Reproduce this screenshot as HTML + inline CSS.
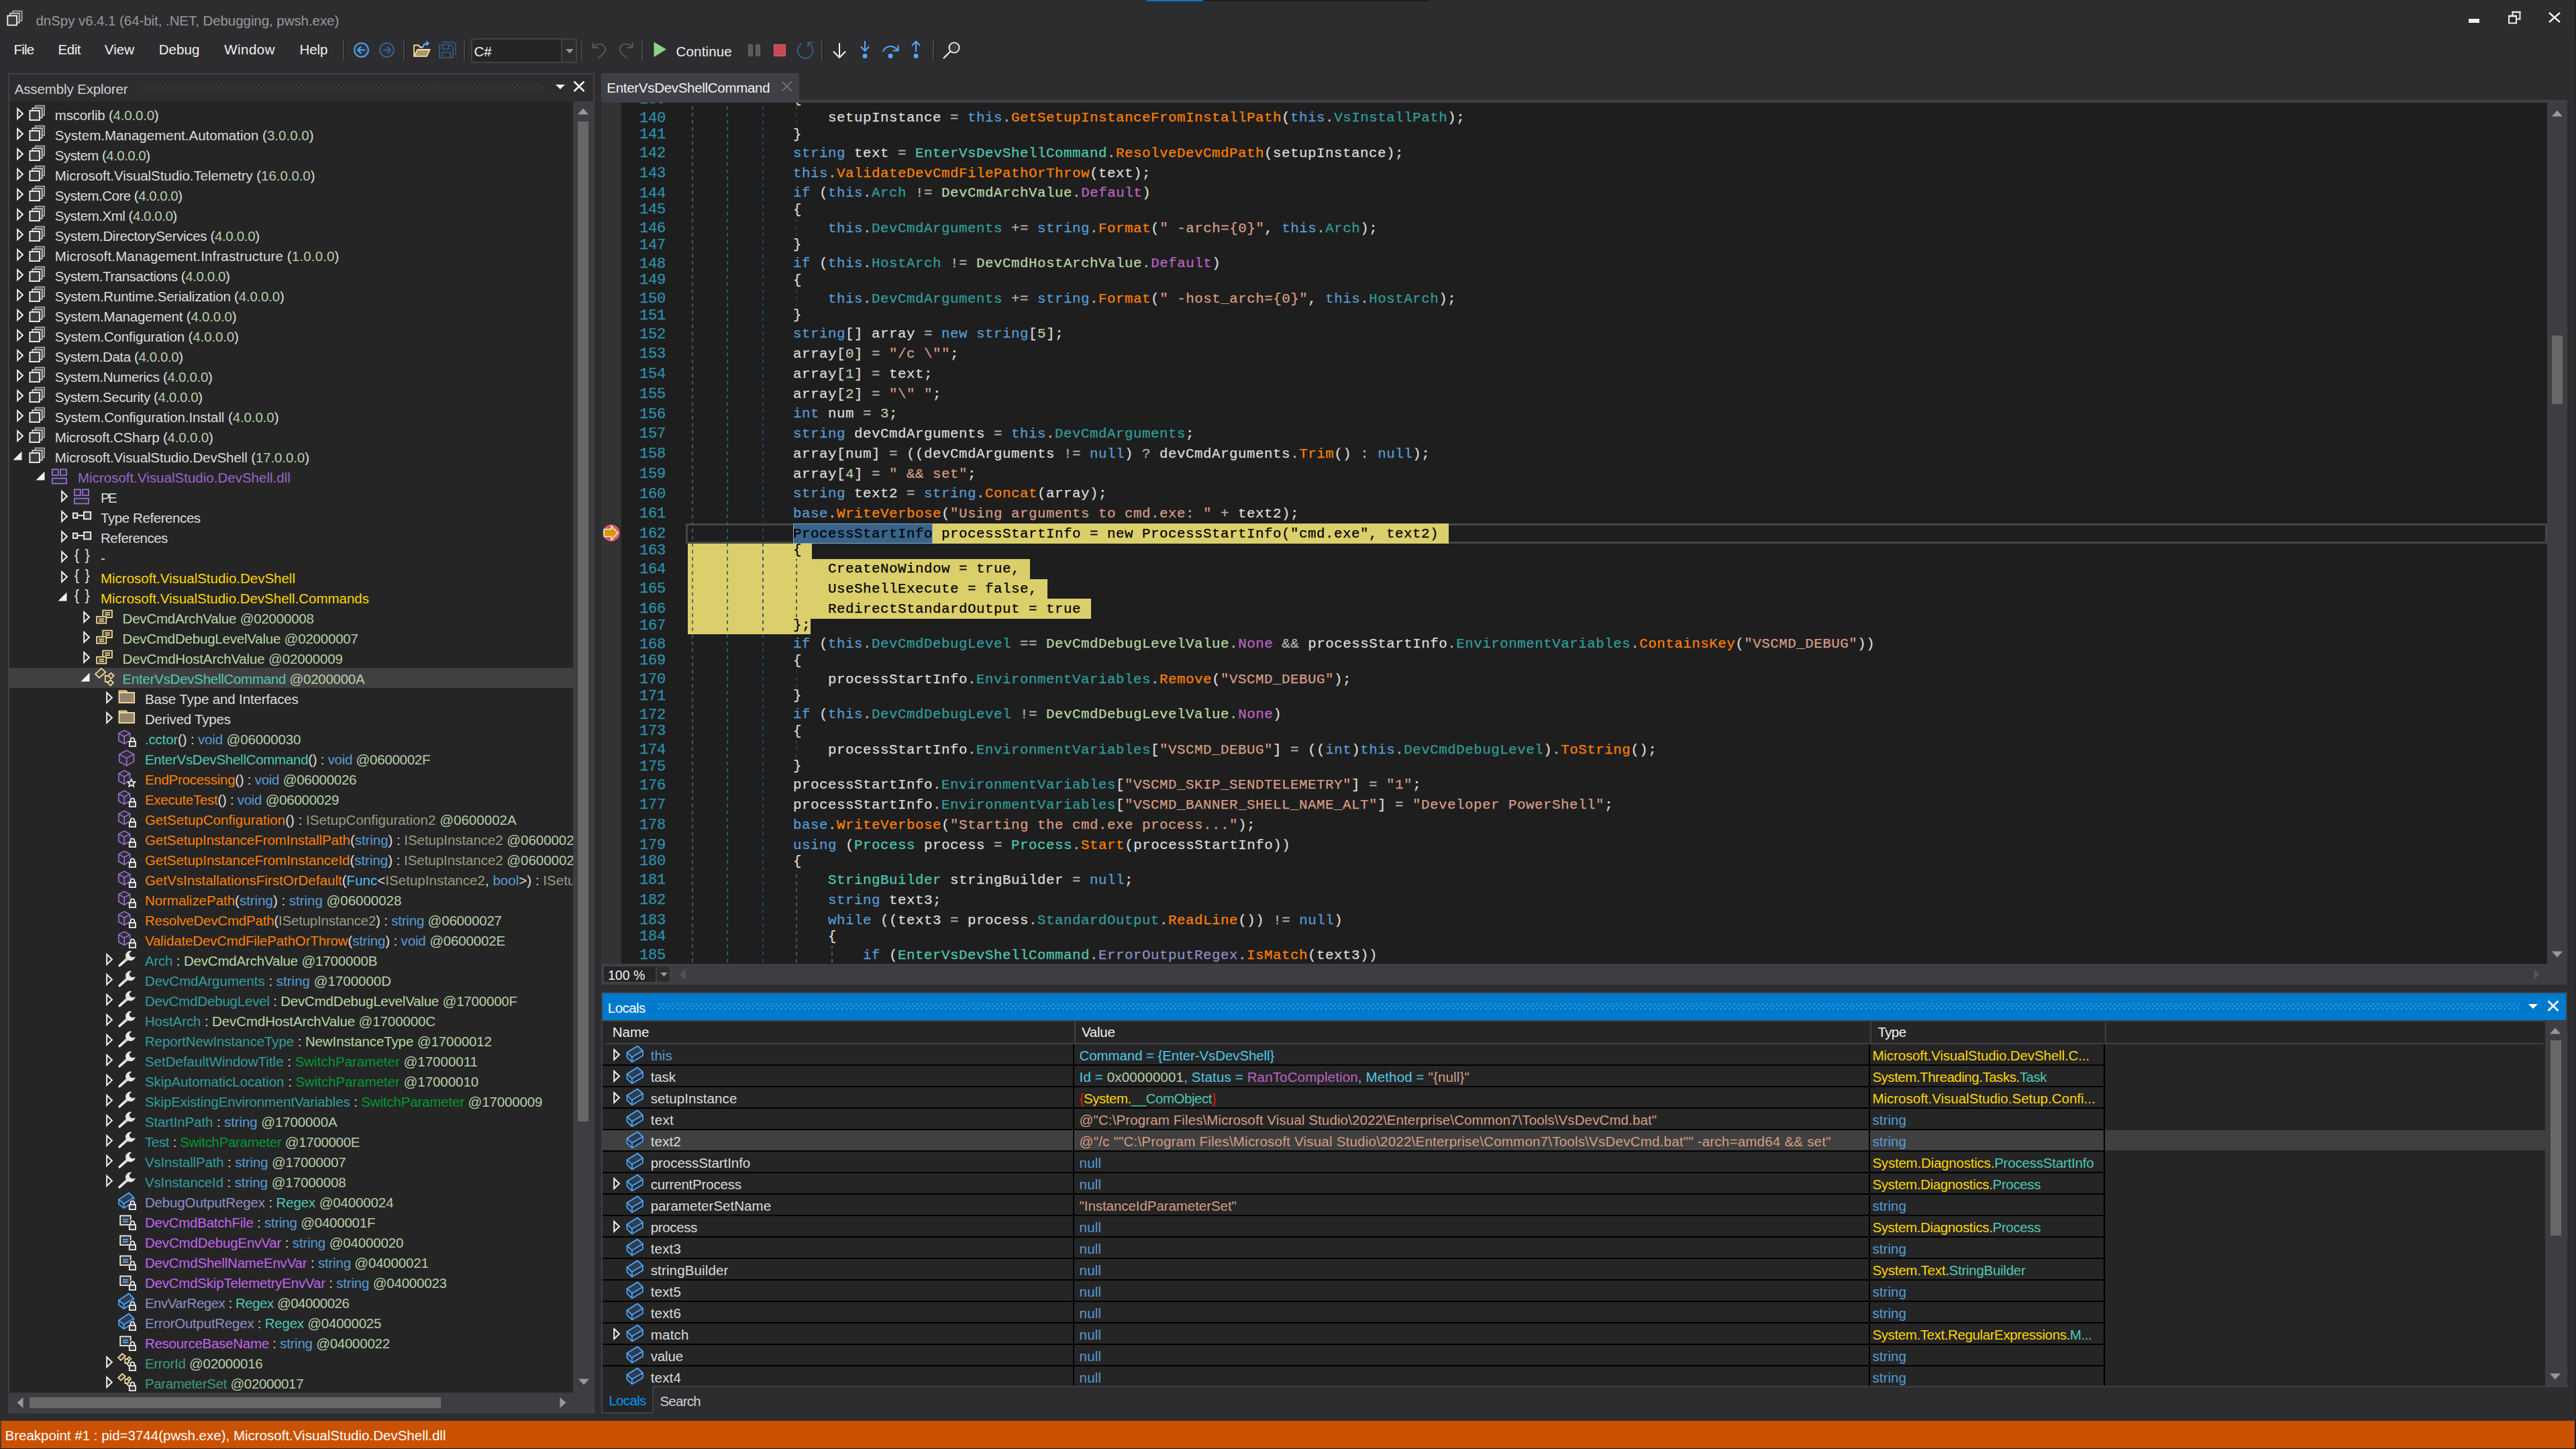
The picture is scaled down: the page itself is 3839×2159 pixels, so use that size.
<!DOCTYPE html><html><head><meta charset="utf-8"><title>dnSpy</title><style>

html,body{margin:0;padding:0;background:#2D2D30;overflow:hidden;}
body{width:3839px;height:2159px;position:relative;overflow:hidden;font-family:"Liberation Sans",sans-serif;color:#F1F1F1;}
.r{position:absolute;}
.u{position:absolute;white-space:pre;font-family:"Liberation Sans",sans-serif;}
.c{position:absolute;white-space:pre;font-family:"Liberation Mono",monospace;font-size:20.8px;height:30px;line-height:30px;letter-spacing:0.520px;-webkit-text-stroke:0.25px;}
.ln{color:#2B91AF;font-size:22.2px;letter-spacing:-0.320px;}
svg{position:absolute;overflow:visible;}
.clip{position:absolute;overflow:hidden;}

</style></head><body>

<div class="r" style="left:1709.0px;top:0.0px;width:84.0px;height:2.0px;background:#007ACC;"></div>
<div class="r" style="left:1793.0px;top:0.0px;width:337.0px;height:2.0px;background:#1E1E1E;"></div>
<svg style="left:10.2px;top:15.0px" width="26.5" height="26.5" viewBox="0 0 16 16"><g fill="#3C3C3C" stroke-width="1"><rect x="5.5" y="0.9" width="8.2" height="8.6" stroke="#A8A8A8"/><rect x="3" y="2.9" width="8.3" height="8.6" stroke="#C8C8C8"/><rect x="0.8" y="5.1" width="8.3" height="8.5" stroke="#F1F1F1" stroke-width="1.1"/></g></svg>
<div class="u" style="left:53.5px;top:16.4px;height:29px;line-height:29px;font-size:20.5px;color:#999999;letter-spacing:-0.062px;">dnSpy v6.4.1 (64-bit, .NET, Debugging, pwsh.exe)</div>
<div class="r" style="left:3679.0px;top:28.0px;width:16.0px;height:6.0px;background:#F1F1F1;"></div>
<svg style="left:3736px;top:15px" width="24" height="22" viewBox="0 0 24 22"><rect x="8.5" y="3" width="11" height="10.5" fill="none" stroke="#F1F1F1" stroke-width="2"/><rect x="7.5" y="1.8" width="13" height="2.4" fill="#F1F1F1"/><rect x="3" y="9" width="11" height="10.5" fill="#2D2D30" stroke="#F1F1F1" stroke-width="2"/><rect x="2" y="7.6" width="13" height="2.6" fill="#F1F1F1"/></svg>
<svg style="left:3796px;top:16px" width="22" height="20" viewBox="0 0 22 20"><path d="M3 3 L19 17 M19 3 L3 17" stroke="#F1F1F1" stroke-width="2.6" fill="none"/></svg>
<div class="u" style="left:20.5px;top:59.1px;height:29px;line-height:29px;font-size:20.5px;color:#F1F1F1;letter-spacing:-0.807px;">File</div>
<div class="u" style="left:86.5px;top:59.1px;height:29px;line-height:29px;font-size:20.5px;color:#F1F1F1;letter-spacing:-0.446px;">Edit</div>
<div class="u" style="left:155.8px;top:59.1px;height:29px;line-height:29px;font-size:20.5px;color:#F1F1F1;letter-spacing:0.069px;">View</div>
<div class="u" style="left:236.7px;top:59.1px;height:29px;line-height:29px;font-size:20.5px;color:#F1F1F1;letter-spacing:0.066px;">Debug</div>
<div class="u" style="left:334.3px;top:59.1px;height:29px;line-height:29px;font-size:20.5px;color:#F1F1F1;letter-spacing:0.457px;">Window</div>
<div class="u" style="left:446.5px;top:59.1px;height:29px;line-height:29px;font-size:20.5px;color:#F1F1F1;letter-spacing:-0.107px;">Help</div>
<div class="r" style="left:510.9px;top:60.0px;width:2.1px;height:30.8px;background:#46464A;"></div>
<div class="r" style="left:513.0px;top:60.0px;width:1.7px;height:30.8px;background:#222224;"></div>
<div class="r" style="left:600.9px;top:60.0px;width:2.1px;height:30.8px;background:#46464A;"></div>
<div class="r" style="left:603.0px;top:60.0px;width:1.7px;height:30.8px;background:#222224;"></div>
<div class="r" style="left:691.0px;top:60.0px;width:2.1px;height:30.8px;background:#46464A;"></div>
<div class="r" style="left:693.1px;top:60.0px;width:1.7px;height:30.8px;background:#222224;"></div>
<div class="r" style="left:865.6px;top:60.0px;width:2.1px;height:30.8px;background:#46464A;"></div>
<div class="r" style="left:867.7px;top:60.0px;width:1.7px;height:30.8px;background:#222224;"></div>
<div class="r" style="left:956.4px;top:60.0px;width:2.1px;height:30.8px;background:#46464A;"></div>
<div class="r" style="left:958.5px;top:60.0px;width:1.7px;height:30.8px;background:#222224;"></div>
<div class="r" style="left:1223.9px;top:60.0px;width:2.1px;height:30.8px;background:#46464A;"></div>
<div class="r" style="left:1226.0px;top:60.0px;width:1.7px;height:30.8px;background:#222224;"></div>
<div class="r" style="left:1390.0px;top:60.0px;width:2.1px;height:30.8px;background:#46464A;"></div>
<div class="r" style="left:1392.1px;top:60.0px;width:1.7px;height:30.8px;background:#222224;"></div>
<svg style="left:527.0px;top:63.0px" width="23" height="23" viewBox="0 0 23 23"><circle cx="11.5" cy="11.5" r="10.4" fill="#2E3542" stroke="#55AAFF" stroke-width="1.9"/><path d="M17 11.5 H6.5 M11 6.5 L6 11.5 L11 16.5" fill="none" stroke="#55AAFF" stroke-width="1.9"/></svg>
<svg style="left:565.0px;top:63.0px" width="23" height="23" viewBox="0 0 23 23"><circle cx="11.5" cy="11.5" r="10.4" fill="#2B2F38" stroke="#3B6490" stroke-width="1.9"/><path d="M6 11.5 H16.5 M12 6.5 L17 11.5 L12 16.5" fill="none" stroke="#3B6490" stroke-width="1.9"/></svg>
<svg style="left:616.0px;top:61.0px" width="26" height="25" viewBox="0 0 26 25"><path d="M1 22.5 V6.5 H8 L10 9.5 H14" fill="none" stroke="#F6DFA0" stroke-width="1.8"/><path d="M1.2 22.8 L6 13 H24.5 L20 22.8 Z" fill="#A8976F" stroke="#F6DFA0" stroke-width="1.8" stroke-linejoin="miter"/><path d="M14.5 10 C14.5 5 17 3.5 22 3.5 M19 0.5 L22.8 3.5 L19 6.8" fill="none" stroke="#55AAFF" stroke-width="1.9"/></svg>
<svg style="left:654.0px;top:62.0px" width="26" height="25" viewBox="0 0 26 25"><path d="M4.5 1 H22 L25 4 V20" fill="none" stroke="#355C86" stroke-width="1.6"/><path d="M1 4.5 H17.5 L21 8 V24 H1 Z M5.5 4.5 V11 H15 V4.5 M5 24 V16 H17 V24" fill="none" stroke="#355C86" stroke-width="1.7"/></svg>
<div class="r" style="left:702.0px;top:57.0px;width:158.0px;height:37.0px;background:#434346;"></div>
<div class="r" style="left:704.0px;top:59.0px;width:133.0px;height:33.0px;background:#252526;"></div>
<div class="r" style="left:837.0px;top:59.0px;width:21.0px;height:33.0px;background:#2D2D30;"></div>
<div class="r" style="left:836.0px;top:59.0px;width:1.5px;height:33.0px;background:#434346;"></div>
<svg style="left:843px;top:73px" width="12" height="7" viewBox="0 0 12 7"><path d="M0 0 H12 L6 6.5 Z" fill="#999999"/></svg>
<div class="u" style="left:706.5px;top:62.4px;height:29px;line-height:29px;font-size:20.5px;color:#F1F1F1;">C#</div>
<svg style="left:882.0px;top:62.0px" width="23" height="26" viewBox="0 0 23 26"><path d="M1.5 1 V9 H9.5" fill="none" stroke="#5A5A5E" stroke-width="1.8"/><path d="M2 9 C6 2 16 2 19.5 8 C21.5 12 20 15 17 18 L9.5 25" fill="none" stroke="#5A5A5E" stroke-width="1.8"/></svg>
<svg style="left:921.0px;top:62.0px" width="23" height="26" viewBox="0 0 23 26"><path d="M21.5 1 V9 H13.5" fill="none" stroke="#5A5A5E" stroke-width="1.8"/><path d="M21 9 C17 2 7 2 3.5 8 C1.5 12 3 15 6 18 L13.5 25" fill="none" stroke="#5A5A5E" stroke-width="1.8"/></svg>
<svg style="left:974px;top:62px" width="20" height="24" viewBox="0 0 20 24"><path d="M0.5 0.5 L19 11.5 L0.5 23 Z" fill="#8DD28A"/></svg>
<div class="u" style="left:1007.6px;top:61.8px;height:29px;line-height:29px;font-size:20.5px;color:#F1F1F1;letter-spacing:0.142px;">Continue</div>
<div class="r" style="left:1115.2px;top:66.0px;width:6.8px;height:18.0px;background:#5A5A5C;border-radius:1.5px;box-sizing:border-box;border:1px solid #68686A;"></div>
<div class="r" style="left:1125.9px;top:66.0px;width:6.8px;height:18.0px;background:#5A5A5C;border-radius:1.5px;box-sizing:border-box;border:1px solid #68686A;"></div>
<div class="r" style="left:1153.0px;top:66.0px;width:18.0px;height:18.0px;background:#C54B55;box-sizing:border-box;border:1.6px solid #F25A66;border-radius:1px;"></div>
<svg style="left:1187.0px;top:61.0px" width="26" height="27" viewBox="0 0 26 27"><path d="M8 4.2 A11.4 11.4 0 1 0 18 4.1" fill="none" stroke="#3B6792" stroke-width="1.6"/><path d="M17.3 9.6 V2.5 H24.4" fill="none" stroke="#3B6792" stroke-width="1.6"/></svg>
<svg style="left:1240.0px;top:63.0px" width="22" height="25" viewBox="0 0 22 25"><path d="M11 1 V22 M2 13.5 L11 22.8 L20 13.5" fill="none" stroke="#F1F1F1" stroke-width="2"/></svg>
<svg style="left:1278.0px;top:60.0px" width="22" height="28" viewBox="0 0 22 28"><path d="M11 1 V15.5 M5 9.5 L11 15.8 L17 9.5" fill="none" stroke="#55AAFF" stroke-width="2"/><circle cx="11" cy="23.5" r="3.4" fill="#55AAFF"/></svg>
<svg style="left:1314.0px;top:60.0px" width="26" height="28" viewBox="0 0 26 28"><path d="M2 17 C5 8 16 6 23.5 14.5" fill="none" stroke="#55AAFF" stroke-width="2"/><path d="M24.5 7.5 V15.5 H16.5" fill="none" stroke="#55AAFF" stroke-width="2"/><circle cx="13" cy="23.5" r="3.4" fill="#55AAFF"/></svg>
<svg style="left:1354.0px;top:60.0px" width="22" height="28" viewBox="0 0 22 28"><path d="M11 17 V2 M5 8 L11 1.8 L17 8" fill="none" stroke="#55AAFF" stroke-width="2"/><circle cx="11" cy="23.5" r="3.4" fill="#55AAFF"/></svg>
<svg style="left:1405.0px;top:62.0px" width="26" height="26" viewBox="0 0 26 26"><circle cx="17" cy="9" r="7.6" fill="#3C3C3C" stroke="#F1F1F1" stroke-width="1.9"/><path d="M11.5 14.5 L1 25" stroke="#F1F1F1" stroke-width="2.2"/></svg>
<div class="r" style="left:12.0px;top:109.0px;width:874.0px;height:1997.0px;background:#3F3F46;"></div>
<div class="r" style="left:14.0px;top:111.0px;width:870.0px;height:40.0px;background:#2D2D30;"></div>
<div class="r" style="left:14.0px;top:151.0px;width:840.0px;height:1924.0px;background:#252526;"></div>
<div class="r" style="left:854.0px;top:151.0px;width:30.0px;height:1924.0px;background:#3E3E42;"></div>
<div class="r" style="left:14.0px;top:2075.0px;width:870.0px;height:29.0px;background:#3E3E42;"></div>
<div class="u" style="left:21.7px;top:118.1px;height:29px;line-height:29px;font-size:20.5px;color:#D0D0D0;letter-spacing:-0.121px;">Assembly Explorer</div>
<svg style="left:210px;top:126px" width="600" height="10" viewBox="0 0 600 10"><defs><pattern id="g210_126" width="7" height="7" patternUnits="userSpaceOnUse"><rect x="0" y="0" width="1.8" height="1.8" fill="#46464A"/><rect x="3.5" y="3.5" width="1.8" height="1.8" fill="#46464A"/></pattern></defs><rect x="0" y="0" width="600" height="9" fill="url(#g210_126)"/></svg>
<svg style="left:828px;top:126.4px" width="14" height="8" viewBox="0 0 14 8"><path d="M0 0 H14 L7 7 Z" fill="#F1F1F1"/></svg>
<svg style="left:854.3px;top:120px" width="18" height="18" viewBox="0 0 18 18"><path d="M1.5 1.5 L16.5 16 M16.5 1.5 L1.5 16" stroke="#F1F1F1" stroke-width="2.6" fill="none"/></svg>
<svg style="left:861px;top:161.4px" width="16" height="10" viewBox="0 0 16 10"><path d="M0 9.5 L8 0.5 L16 9.5 Z" fill="#999999"/></svg>
<div class="r" style="left:861.0px;top:181.0px;width:16.0px;height:1490.0px;background:#686868;"></div>
<svg style="left:862px;top:2054px" width="16" height="10" viewBox="0 0 16 10"><path d="M0 0.5 L8 9.5 L16 0.5 Z" fill="#999999"/></svg>
<svg style="left:25px;top:2082px" width="10" height="16" viewBox="0 0 10 16"><path d="M9.5 0 L0.5 8 L9.5 16 Z" fill="#999999"/></svg>
<div class="r" style="left:44.0px;top:2082.0px;width:613.0px;height:16.0px;background:#686868;"></div>
<svg style="left:834px;top:2082px" width="10" height="16" viewBox="0 0 10 16"><path d="M0.5 0 L9.5 8 L0.5 16 Z" fill="#999999"/></svg>
<div class="clip" style="left:14px;top:151px;width:840px;height:1924px">
<svg style="left:10.5px;top:8.8px" width="12" height="19" viewBox="0 0 12 19"><path d="M1.2 2 L8.9 9.5 L1.2 17 Z" fill="none" stroke="#F1F1F1" stroke-width="2"/></svg>
<svg style="left:29.2px;top:5.0px" width="28" height="28" viewBox="0 0 16 16"><g fill="#3C3C3C" stroke-width="1"><rect x="5.5" y="0.9" width="7.7" height="8.1" stroke="#A8A8A8"/><rect x="3" y="2.9" width="8.3" height="8.3" stroke="#C8C8C8"/><rect x="0.8" y="5.1" width="8.3" height="8" stroke="#F1F1F1" stroke-width="1.1"/></g></svg>
<div class="u" style="left:67.8px;top:6.1px;height:29px;line-height:29px;font-size:20.5px;letter-spacing:-0.205px;"><span style="color:#DCDCDC">mscorlib (</span><span style="color:#B5CEA8">4.0.0.0</span><span style="color:#DCDCDC">)</span></div>
<svg style="left:10.5px;top:38.8px" width="12" height="19" viewBox="0 0 12 19"><path d="M1.2 2 L8.9 9.5 L1.2 17 Z" fill="none" stroke="#F1F1F1" stroke-width="2"/></svg>
<svg style="left:29.2px;top:35.0px" width="28" height="28" viewBox="0 0 16 16"><g fill="#3C3C3C" stroke-width="1"><rect x="5.5" y="0.9" width="7.7" height="8.1" stroke="#A8A8A8"/><rect x="3" y="2.9" width="8.3" height="8.3" stroke="#C8C8C8"/><rect x="0.8" y="5.1" width="8.3" height="8" stroke="#F1F1F1" stroke-width="1.1"/></g></svg>
<div class="u" style="left:67.8px;top:36.1px;height:29px;line-height:29px;font-size:20.5px;letter-spacing:0.016px;"><span style="color:#DCDCDC">System.Management.Automation (</span><span style="color:#B5CEA8">3.0.0.0</span><span style="color:#DCDCDC">)</span></div>
<svg style="left:10.5px;top:68.8px" width="12" height="19" viewBox="0 0 12 19"><path d="M1.2 2 L8.9 9.5 L1.2 17 Z" fill="none" stroke="#F1F1F1" stroke-width="2"/></svg>
<svg style="left:29.2px;top:65.0px" width="28" height="28" viewBox="0 0 16 16"><g fill="#3C3C3C" stroke-width="1"><rect x="5.5" y="0.9" width="7.7" height="8.1" stroke="#A8A8A8"/><rect x="3" y="2.9" width="8.3" height="8.3" stroke="#C8C8C8"/><rect x="0.8" y="5.1" width="8.3" height="8" stroke="#F1F1F1" stroke-width="1.1"/></g></svg>
<div class="u" style="left:67.8px;top:66.1px;height:29px;line-height:29px;font-size:20.5px;letter-spacing:-0.547px;"><span style="color:#DCDCDC">System (</span><span style="color:#B5CEA8">4.0.0.0</span><span style="color:#DCDCDC">)</span></div>
<svg style="left:10.5px;top:98.8px" width="12" height="19" viewBox="0 0 12 19"><path d="M1.2 2 L8.9 9.5 L1.2 17 Z" fill="none" stroke="#F1F1F1" stroke-width="2"/></svg>
<svg style="left:29.2px;top:95.0px" width="28" height="28" viewBox="0 0 16 16"><g fill="#3C3C3C" stroke-width="1"><rect x="5.5" y="0.9" width="7.7" height="8.1" stroke="#A8A8A8"/><rect x="3" y="2.9" width="8.3" height="8.3" stroke="#C8C8C8"/><rect x="0.8" y="5.1" width="8.3" height="8" stroke="#F1F1F1" stroke-width="1.1"/></g></svg>
<div class="u" style="left:67.8px;top:96.1px;height:29px;line-height:29px;font-size:20.5px;letter-spacing:-0.065px;"><span style="color:#DCDCDC">Microsoft.VisualStudio.Telemetry (</span><span style="color:#B5CEA8">16.0.0.0</span><span style="color:#DCDCDC">)</span></div>
<svg style="left:10.5px;top:128.8px" width="12" height="19" viewBox="0 0 12 19"><path d="M1.2 2 L8.9 9.5 L1.2 17 Z" fill="none" stroke="#F1F1F1" stroke-width="2"/></svg>
<svg style="left:29.2px;top:125.0px" width="28" height="28" viewBox="0 0 16 16"><g fill="#3C3C3C" stroke-width="1"><rect x="5.5" y="0.9" width="7.7" height="8.1" stroke="#A8A8A8"/><rect x="3" y="2.9" width="8.3" height="8.3" stroke="#C8C8C8"/><rect x="0.8" y="5.1" width="8.3" height="8" stroke="#F1F1F1" stroke-width="1.1"/></g></svg>
<div class="u" style="left:67.8px;top:126.1px;height:29px;line-height:29px;font-size:20.5px;letter-spacing:-0.514px;"><span style="color:#DCDCDC">System.Core (</span><span style="color:#B5CEA8">4.0.0.0</span><span style="color:#DCDCDC">)</span></div>
<svg style="left:10.5px;top:158.8px" width="12" height="19" viewBox="0 0 12 19"><path d="M1.2 2 L8.9 9.5 L1.2 17 Z" fill="none" stroke="#F1F1F1" stroke-width="2"/></svg>
<svg style="left:29.2px;top:155.0px" width="28" height="28" viewBox="0 0 16 16"><g fill="#3C3C3C" stroke-width="1"><rect x="5.5" y="0.9" width="7.7" height="8.1" stroke="#A8A8A8"/><rect x="3" y="2.9" width="8.3" height="8.3" stroke="#C8C8C8"/><rect x="0.8" y="5.1" width="8.3" height="8" stroke="#F1F1F1" stroke-width="1.1"/></g></svg>
<div class="u" style="left:67.8px;top:156.1px;height:29px;line-height:29px;font-size:20.5px;letter-spacing:-0.475px;"><span style="color:#DCDCDC">System.Xml (</span><span style="color:#B5CEA8">4.0.0.0</span><span style="color:#DCDCDC">)</span></div>
<svg style="left:10.5px;top:188.8px" width="12" height="19" viewBox="0 0 12 19"><path d="M1.2 2 L8.9 9.5 L1.2 17 Z" fill="none" stroke="#F1F1F1" stroke-width="2"/></svg>
<svg style="left:29.2px;top:185.0px" width="28" height="28" viewBox="0 0 16 16"><g fill="#3C3C3C" stroke-width="1"><rect x="5.5" y="0.9" width="7.7" height="8.1" stroke="#A8A8A8"/><rect x="3" y="2.9" width="8.3" height="8.3" stroke="#C8C8C8"/><rect x="0.8" y="5.1" width="8.3" height="8" stroke="#F1F1F1" stroke-width="1.1"/></g></svg>
<div class="u" style="left:67.8px;top:186.1px;height:29px;line-height:29px;font-size:20.5px;letter-spacing:-0.348px;"><span style="color:#DCDCDC">System.DirectoryServices (</span><span style="color:#B5CEA8">4.0.0.0</span><span style="color:#DCDCDC">)</span></div>
<svg style="left:10.5px;top:218.8px" width="12" height="19" viewBox="0 0 12 19"><path d="M1.2 2 L8.9 9.5 L1.2 17 Z" fill="none" stroke="#F1F1F1" stroke-width="2"/></svg>
<svg style="left:29.2px;top:215.0px" width="28" height="28" viewBox="0 0 16 16"><g fill="#3C3C3C" stroke-width="1"><rect x="5.5" y="0.9" width="7.7" height="8.1" stroke="#A8A8A8"/><rect x="3" y="2.9" width="8.3" height="8.3" stroke="#C8C8C8"/><rect x="0.8" y="5.1" width="8.3" height="8" stroke="#F1F1F1" stroke-width="1.1"/></g></svg>
<div class="u" style="left:67.8px;top:216.1px;height:29px;line-height:29px;font-size:20.5px;letter-spacing:0.15px;"><span style="color:#DCDCDC">Microsoft.Management.Infrastructure (</span><span style="color:#B5CEA8">1.0.0.0</span><span style="color:#DCDCDC">)</span></div>
<svg style="left:10.5px;top:248.8px" width="12" height="19" viewBox="0 0 12 19"><path d="M1.2 2 L8.9 9.5 L1.2 17 Z" fill="none" stroke="#F1F1F1" stroke-width="2"/></svg>
<svg style="left:29.2px;top:245.0px" width="28" height="28" viewBox="0 0 16 16"><g fill="#3C3C3C" stroke-width="1"><rect x="5.5" y="0.9" width="7.7" height="8.1" stroke="#A8A8A8"/><rect x="3" y="2.9" width="8.3" height="8.3" stroke="#C8C8C8"/><rect x="0.8" y="5.1" width="8.3" height="8" stroke="#F1F1F1" stroke-width="1.1"/></g></svg>
<div class="u" style="left:67.8px;top:246.1px;height:29px;line-height:29px;font-size:20.5px;letter-spacing:-0.419px;"><span style="color:#DCDCDC">System.Transactions (</span><span style="color:#B5CEA8">4.0.0.0</span><span style="color:#DCDCDC">)</span></div>
<svg style="left:10.5px;top:278.8px" width="12" height="19" viewBox="0 0 12 19"><path d="M1.2 2 L8.9 9.5 L1.2 17 Z" fill="none" stroke="#F1F1F1" stroke-width="2"/></svg>
<svg style="left:29.2px;top:275.0px" width="28" height="28" viewBox="0 0 16 16"><g fill="#3C3C3C" stroke-width="1"><rect x="5.5" y="0.9" width="7.7" height="8.1" stroke="#A8A8A8"/><rect x="3" y="2.9" width="8.3" height="8.3" stroke="#C8C8C8"/><rect x="0.8" y="5.1" width="8.3" height="8" stroke="#F1F1F1" stroke-width="1.1"/></g></svg>
<div class="u" style="left:67.8px;top:276.1px;height:29px;line-height:29px;font-size:20.5px;letter-spacing:-0.211px;"><span style="color:#DCDCDC">System.Runtime.Serialization (</span><span style="color:#B5CEA8">4.0.0.0</span><span style="color:#DCDCDC">)</span></div>
<svg style="left:10.5px;top:308.8px" width="12" height="19" viewBox="0 0 12 19"><path d="M1.2 2 L8.9 9.5 L1.2 17 Z" fill="none" stroke="#F1F1F1" stroke-width="2"/></svg>
<svg style="left:29.2px;top:305.0px" width="28" height="28" viewBox="0 0 16 16"><g fill="#3C3C3C" stroke-width="1"><rect x="5.5" y="0.9" width="7.7" height="8.1" stroke="#A8A8A8"/><rect x="3" y="2.9" width="8.3" height="8.3" stroke="#C8C8C8"/><rect x="0.8" y="5.1" width="8.3" height="8" stroke="#F1F1F1" stroke-width="1.1"/></g></svg>
<div class="u" style="left:67.8px;top:306.1px;height:29px;line-height:29px;font-size:20.5px;letter-spacing:-0.191px;"><span style="color:#DCDCDC">System.Management (</span><span style="color:#B5CEA8">4.0.0.0</span><span style="color:#DCDCDC">)</span></div>
<svg style="left:10.5px;top:338.8px" width="12" height="19" viewBox="0 0 12 19"><path d="M1.2 2 L8.9 9.5 L1.2 17 Z" fill="none" stroke="#F1F1F1" stroke-width="2"/></svg>
<svg style="left:29.2px;top:335.0px" width="28" height="28" viewBox="0 0 16 16"><g fill="#3C3C3C" stroke-width="1"><rect x="5.5" y="0.9" width="7.7" height="8.1" stroke="#A8A8A8"/><rect x="3" y="2.9" width="8.3" height="8.3" stroke="#C8C8C8"/><rect x="0.8" y="5.1" width="8.3" height="8" stroke="#F1F1F1" stroke-width="1.1"/></g></svg>
<div class="u" style="left:67.8px;top:336.1px;height:29px;line-height:29px;font-size:20.5px;letter-spacing:-0.136px;"><span style="color:#DCDCDC">System.Configuration (</span><span style="color:#B5CEA8">4.0.0.0</span><span style="color:#DCDCDC">)</span></div>
<svg style="left:10.5px;top:368.8px" width="12" height="19" viewBox="0 0 12 19"><path d="M1.2 2 L8.9 9.5 L1.2 17 Z" fill="none" stroke="#F1F1F1" stroke-width="2"/></svg>
<svg style="left:29.2px;top:365.0px" width="28" height="28" viewBox="0 0 16 16"><g fill="#3C3C3C" stroke-width="1"><rect x="5.5" y="0.9" width="7.7" height="8.1" stroke="#A8A8A8"/><rect x="3" y="2.9" width="8.3" height="8.3" stroke="#C8C8C8"/><rect x="0.8" y="5.1" width="8.3" height="8" stroke="#F1F1F1" stroke-width="1.1"/></g></svg>
<div class="u" style="left:67.8px;top:366.1px;height:29px;line-height:29px;font-size:20.5px;letter-spacing:-0.408px;"><span style="color:#DCDCDC">System.Data (</span><span style="color:#B5CEA8">4.0.0.0</span><span style="color:#DCDCDC">)</span></div>
<svg style="left:10.5px;top:398.8px" width="12" height="19" viewBox="0 0 12 19"><path d="M1.2 2 L8.9 9.5 L1.2 17 Z" fill="none" stroke="#F1F1F1" stroke-width="2"/></svg>
<svg style="left:29.2px;top:395.0px" width="28" height="28" viewBox="0 0 16 16"><g fill="#3C3C3C" stroke-width="1"><rect x="5.5" y="0.9" width="7.7" height="8.1" stroke="#A8A8A8"/><rect x="3" y="2.9" width="8.3" height="8.3" stroke="#C8C8C8"/><rect x="0.8" y="5.1" width="8.3" height="8" stroke="#F1F1F1" stroke-width="1.1"/></g></svg>
<div class="u" style="left:67.8px;top:396.1px;height:29px;line-height:29px;font-size:20.5px;letter-spacing:-0.314px;"><span style="color:#DCDCDC">System.Numerics (</span><span style="color:#B5CEA8">4.0.0.0</span><span style="color:#DCDCDC">)</span></div>
<svg style="left:10.5px;top:428.8px" width="12" height="19" viewBox="0 0 12 19"><path d="M1.2 2 L8.9 9.5 L1.2 17 Z" fill="none" stroke="#F1F1F1" stroke-width="2"/></svg>
<svg style="left:29.2px;top:425.0px" width="28" height="28" viewBox="0 0 16 16"><g fill="#3C3C3C" stroke-width="1"><rect x="5.5" y="0.9" width="7.7" height="8.1" stroke="#A8A8A8"/><rect x="3" y="2.9" width="8.3" height="8.3" stroke="#C8C8C8"/><rect x="0.8" y="5.1" width="8.3" height="8" stroke="#F1F1F1" stroke-width="1.1"/></g></svg>
<div class="u" style="left:67.8px;top:426.1px;height:29px;line-height:29px;font-size:20.5px;letter-spacing:-0.41px;"><span style="color:#DCDCDC">System.Security (</span><span style="color:#B5CEA8">4.0.0.0</span><span style="color:#DCDCDC">)</span></div>
<svg style="left:10.5px;top:458.8px" width="12" height="19" viewBox="0 0 12 19"><path d="M1.2 2 L8.9 9.5 L1.2 17 Z" fill="none" stroke="#F1F1F1" stroke-width="2"/></svg>
<svg style="left:29.2px;top:455.0px" width="28" height="28" viewBox="0 0 16 16"><g fill="#3C3C3C" stroke-width="1"><rect x="5.5" y="0.9" width="7.7" height="8.1" stroke="#A8A8A8"/><rect x="3" y="2.9" width="8.3" height="8.3" stroke="#C8C8C8"/><rect x="0.8" y="5.1" width="8.3" height="8" stroke="#F1F1F1" stroke-width="1.1"/></g></svg>
<div class="u" style="left:67.8px;top:456.1px;height:29px;line-height:29px;font-size:20.5px;letter-spacing:-0.097px;"><span style="color:#DCDCDC">System.Configuration.Install (</span><span style="color:#B5CEA8">4.0.0.0</span><span style="color:#DCDCDC">)</span></div>
<svg style="left:10.5px;top:488.8px" width="12" height="19" viewBox="0 0 12 19"><path d="M1.2 2 L8.9 9.5 L1.2 17 Z" fill="none" stroke="#F1F1F1" stroke-width="2"/></svg>
<svg style="left:29.2px;top:485.0px" width="28" height="28" viewBox="0 0 16 16"><g fill="#3C3C3C" stroke-width="1"><rect x="5.5" y="0.9" width="7.7" height="8.1" stroke="#A8A8A8"/><rect x="3" y="2.9" width="8.3" height="8.3" stroke="#C8C8C8"/><rect x="0.8" y="5.1" width="8.3" height="8" stroke="#F1F1F1" stroke-width="1.1"/></g></svg>
<div class="u" style="left:67.8px;top:486.1px;height:29px;line-height:29px;font-size:20.5px;letter-spacing:-0.172px;"><span style="color:#DCDCDC">Microsoft.CSharp (</span><span style="color:#B5CEA8">4.0.0.0</span><span style="color:#DCDCDC">)</span></div>
<svg style="left:5.3px;top:520.6px" width="14" height="14" viewBox="0 0 14 14"><path d="M13.5 0.5 V13.5 H0.5 Z" fill="#F1F1F1"/></svg>
<svg style="left:29.2px;top:515.0px" width="28" height="28" viewBox="0 0 16 16"><g fill="#3C3C3C" stroke-width="1"><rect x="5.5" y="0.9" width="7.7" height="8.1" stroke="#A8A8A8"/><rect x="3" y="2.9" width="8.3" height="8.3" stroke="#C8C8C8"/><rect x="0.8" y="5.1" width="8.3" height="8" stroke="#F1F1F1" stroke-width="1.1"/></g></svg>
<div class="u" style="left:67.8px;top:516.1px;height:29px;line-height:29px;font-size:20.5px;letter-spacing:-0.109px;"><span style="color:#DCDCDC">Microsoft.VisualStudio.DevShell (</span><span style="color:#B5CEA8">17.0.0.0</span><span style="color:#DCDCDC">)</span></div>
<svg style="left:38.7px;top:550.6px" width="14" height="14" viewBox="0 0 14 14"><path d="M13.5 0.5 V13.5 H0.5 Z" fill="#F1F1F1"/></svg>
<svg style="left:62.5px;top:545.0px" width="28" height="28" viewBox="0 0 16 16"><g fill="#2E2A36" stroke="#9E76D4" stroke-width="0.95"><rect x="0.5" y="1.9" width="5.1" height="5.1"/><rect x="7.5" y="1.9" width="5.1" height="5.1"/><rect x="0.5" y="9.5" width="12.1" height="4.5"/></g></svg>
<div class="u" style="left:102.0px;top:546.1px;height:29px;line-height:29px;font-size:20.5px;letter-spacing:0.012px;"><span style="color:#9966CC">Microsoft.VisualStudio.DevShell.dll</span></div>
<svg style="left:76.9px;top:578.8px" width="12" height="19" viewBox="0 0 12 19"><path d="M1.2 2 L8.9 9.5 L1.2 17 Z" fill="none" stroke="#F1F1F1" stroke-width="2"/></svg>
<svg style="left:95.8px;top:575.0px" width="28" height="28" viewBox="0 0 16 16"><g fill="#2E2A36" stroke="#9E76D4" stroke-width="0.95"><rect x="0.5" y="1.9" width="5.1" height="5.1"/><rect x="7.5" y="1.9" width="5.1" height="5.1"/><rect x="0.5" y="9.5" width="12.1" height="4.5"/></g></svg>
<div class="u" style="left:136.0px;top:576.1px;height:29px;line-height:29px;font-size:20.5px;letter-spacing:-2.685px;"><span style="color:#DCDCDC">PE</span></div>
<svg style="left:76.9px;top:608.8px" width="12" height="19" viewBox="0 0 12 19"><path d="M1.2 2 L8.9 9.5 L1.2 17 Z" fill="none" stroke="#F1F1F1" stroke-width="2"/></svg>
<svg style="left:95.8px;top:605.0px" width="28" height="28" viewBox="0 0 16 16"><g fill="#3C3C3C" stroke="#F1F1F1" stroke-width="1.1"><path d="M3.4 6.9 H8.1" fill="none"/><rect x="-0.6" y="4.9" width="3.6" height="4.2"/><rect x="8.6" y="3.9" width="5.8" height="6"/></g></svg>
<div class="u" style="left:136.0px;top:606.1px;height:29px;line-height:29px;font-size:20.5px;letter-spacing:-0.418px;"><span style="color:#DCDCDC">Type References</span></div>
<svg style="left:76.9px;top:638.8px" width="12" height="19" viewBox="0 0 12 19"><path d="M1.2 2 L8.9 9.5 L1.2 17 Z" fill="none" stroke="#F1F1F1" stroke-width="2"/></svg>
<svg style="left:95.8px;top:635.0px" width="28" height="28" viewBox="0 0 16 16"><g fill="#3C3C3C" stroke="#F1F1F1" stroke-width="1.1"><path d="M3.4 6.9 H8.1" fill="none"/><rect x="-0.6" y="4.9" width="3.6" height="4.2"/><rect x="8.6" y="3.9" width="5.8" height="6"/></g></svg>
<div class="u" style="left:136.0px;top:636.1px;height:29px;line-height:29px;font-size:20.5px;letter-spacing:-0.496px;"><span style="color:#DCDCDC">References</span></div>
<svg style="left:76.9px;top:668.8px" width="12" height="19" viewBox="0 0 12 19"><path d="M1.2 2 L8.9 9.5 L1.2 17 Z" fill="none" stroke="#F1F1F1" stroke-width="2"/></svg>
<div class="u" style="left:96.8px;top:660.1px;height:31px;line-height:31px;font-size:22px;color:#DCDCDC;letter-spacing:1.1px;">{ }</div>
<div class="u" style="left:136.0px;top:666.1px;height:29px;line-height:29px;font-size:20.5px;letter-spacing:-0.119px;"><span style="color:#DCDCDC">-</span></div>
<svg style="left:76.9px;top:698.8px" width="12" height="19" viewBox="0 0 12 19"><path d="M1.2 2 L8.9 9.5 L1.2 17 Z" fill="none" stroke="#F1F1F1" stroke-width="2"/></svg>
<div class="u" style="left:96.8px;top:690.1px;height:31px;line-height:31px;font-size:22px;color:#DCDCDC;letter-spacing:1.1px;">{ }</div>
<div class="u" style="left:136.0px;top:696.1px;height:29px;line-height:29px;font-size:20.5px;letter-spacing:-0.007px;"><span style="color:#FFD700">Microsoft.VisualStudio.DevShell</span></div>
<svg style="left:72.4px;top:730.6px" width="14" height="14" viewBox="0 0 14 14"><path d="M13.5 0.5 V13.5 H0.5 Z" fill="#F1F1F1"/></svg>
<div class="u" style="left:96.8px;top:720.1px;height:31px;line-height:31px;font-size:22px;color:#DCDCDC;letter-spacing:1.1px;">{ }</div>
<div class="u" style="left:136.0px;top:726.1px;height:29px;line-height:29px;font-size:20.5px;letter-spacing:-0.019px;"><span style="color:#FFD700">Microsoft.VisualStudio.DevShell.Commands</span></div>
<svg style="left:110.4px;top:758.8px" width="12" height="19" viewBox="0 0 12 19"><path d="M1.2 2 L8.9 9.5 L1.2 17 Z" fill="none" stroke="#F1F1F1" stroke-width="2"/></svg>
<svg style="left:129.0px;top:755.0px" width="28" height="28" viewBox="0 0 16 16"><g fill="#2F2B22" stroke="#F6DFA0" stroke-width="1"><rect x="5.9" y="2" width="7.8" height="6"/><path d="M7.6 4 H12 M7.6 5.8 H12" fill="none"/><rect x="0.65" y="7.3" width="8.1" height="5.6"/><path d="M2.4 9.3 H7 M2.4 11 H7" fill="none"/></g></svg>
<div class="u" style="left:168.6px;top:756.1px;height:29px;line-height:29px;font-size:20.5px;letter-spacing:-0.215px;"><span style="color:#B8D7A3">DevCmdArchValue</span><span style="color:#DCDCDC"> </span><span style="color:#B5CEA8">@02000008</span></div>
<svg style="left:110.4px;top:788.8px" width="12" height="19" viewBox="0 0 12 19"><path d="M1.2 2 L8.9 9.5 L1.2 17 Z" fill="none" stroke="#F1F1F1" stroke-width="2"/></svg>
<svg style="left:129.0px;top:785.0px" width="28" height="28" viewBox="0 0 16 16"><g fill="#2F2B22" stroke="#F6DFA0" stroke-width="1"><rect x="5.9" y="2" width="7.8" height="6"/><path d="M7.6 4 H12 M7.6 5.8 H12" fill="none"/><rect x="0.65" y="7.3" width="8.1" height="5.6"/><path d="M2.4 9.3 H7 M2.4 11 H7" fill="none"/></g></svg>
<div class="u" style="left:168.6px;top:786.1px;height:29px;line-height:29px;font-size:20.5px;letter-spacing:-0.216px;"><span style="color:#B8D7A3">DevCmdDebugLevelValue</span><span style="color:#DCDCDC"> </span><span style="color:#B5CEA8">@02000007</span></div>
<svg style="left:110.4px;top:818.8px" width="12" height="19" viewBox="0 0 12 19"><path d="M1.2 2 L8.9 9.5 L1.2 17 Z" fill="none" stroke="#F1F1F1" stroke-width="2"/></svg>
<svg style="left:129.0px;top:815.0px" width="28" height="28" viewBox="0 0 16 16"><g fill="#2F2B22" stroke="#F6DFA0" stroke-width="1"><rect x="5.9" y="2" width="7.8" height="6"/><path d="M7.6 4 H12 M7.6 5.8 H12" fill="none"/><rect x="0.65" y="7.3" width="8.1" height="5.6"/><path d="M2.4 9.3 H7 M2.4 11 H7" fill="none"/></g></svg>
<div class="u" style="left:168.6px;top:816.1px;height:29px;line-height:29px;font-size:20.5px;letter-spacing:-0.161px;"><span style="color:#B8D7A3">DevCmdHostArchValue</span><span style="color:#DCDCDC"> </span><span style="color:#B5CEA8">@02000009</span></div>
<div class="r" style="left:0.0px;top:844.0px;width:840.0px;height:30.0px;background:#404040;"></div>
<svg style="left:105.8px;top:850.6px" width="14" height="14" viewBox="0 0 14 14"><path d="M13.5 0.5 V13.5 H0.5 Z" fill="#F1F1F1"/></svg>
<svg style="left:129.0px;top:845.0px" width="28" height="28" viewBox="0 0 16 16"><g transform="translate(0 0) scale(1.0)" fill="#4A4438" stroke="#F6DFA0" stroke-width="1.00" stroke-linejoin="miter"><path d="M7.9 5.3 V11.4 H10.6 M7.9 6.4 H10.6" fill="none"/><path d="M4.55 -0.1 L8.2 3.1 L2.75 8 L-0.5 4.7 Z"/><path d="M12.8 3.8 L15.2 6.2 L12.8 8.6 L10.4 6.2 Z"/><path d="M12.4 9.8 L14.8 12.2 L12.4 14.6 L10 12.2 Z"/></g></svg>
<div class="u" style="left:168.6px;top:846.1px;height:29px;line-height:29px;font-size:20.5px;letter-spacing:-0.273px;"><span style="color:#4EC9B0">EnterVsDevShellCommand</span><span style="color:#DCDCDC"> </span><span style="color:#B5CEA8">@0200000A</span></div>
<svg style="left:143.6px;top:878.8px" width="12" height="19" viewBox="0 0 12 19"><path d="M1.2 2 L8.9 9.5 L1.2 17 Z" fill="none" stroke="#F1F1F1" stroke-width="2"/></svg>
<svg style="left:162.2px;top:875.0px" width="28" height="28" viewBox="0 0 16 16"><path d="M0.85 1.9 H7 L7.9 3.4 H13.8 V12.1 H0.85 Z" fill="#94846A" stroke="#F6DFA0" stroke-width="1" stroke-linejoin="miter"/><path d="M0.85 3.4 H7.9" stroke="#F6DFA0" stroke-width="1" fill="none"/></svg>
<div class="u" style="left:201.9px;top:876.1px;height:29px;line-height:29px;font-size:20.5px;letter-spacing:-0.136px;"><span style="color:#DCDCDC">Base Type and Interfaces</span></div>
<svg style="left:143.6px;top:908.8px" width="12" height="19" viewBox="0 0 12 19"><path d="M1.2 2 L8.9 9.5 L1.2 17 Z" fill="none" stroke="#F1F1F1" stroke-width="2"/></svg>
<svg style="left:162.2px;top:905.0px" width="28" height="28" viewBox="0 0 16 16"><path d="M0.85 1.9 H7 L7.9 3.4 H13.8 V12.1 H0.85 Z" fill="#94846A" stroke="#F6DFA0" stroke-width="1" stroke-linejoin="miter"/><path d="M0.85 3.4 H7.9" stroke="#F6DFA0" stroke-width="1" fill="none"/></svg>
<div class="u" style="left:201.9px;top:906.1px;height:29px;line-height:29px;font-size:20.5px;letter-spacing:-0.218px;"><span style="color:#DCDCDC">Derived Types</span></div>
<svg style="left:162.2px;top:935.0px" width="28" height="28" viewBox="0 0 16 16"><path d="M5.3 1.2 L10.1 3.8 V10 L5.3 12.8 L0.5 10 V3.8 Z" fill="#2E2A36" stroke="#9E76D4" stroke-width="0.9" stroke-linejoin="round"/><path d="M0.5 3.8 L5.3 6.5 L10.1 3.8 M5.3 6.5 V12.8" fill="none" stroke="#9E76D4" stroke-width="0.9"/><path d="M10.6 10.6 V9.3 A1.65 1.65 0 0 1 13.9 9.3 V10.6" fill="none" stroke="#252526" stroke-width="2.6"/><rect x="9.1" y="10.3" width="6.3" height="5.1" fill="#252526"/><path d="M10.6 10.6 V9.3 A1.65 1.65 0 0 1 13.9 9.3 V10.6" fill="none" stroke="#F1F1F1" stroke-width="1.1"/><rect x="9.6" y="10.8" width="5.3" height="4.1" fill="#3C3C3C" stroke="#F1F1F1" stroke-width="1"/></svg>
<div class="u" style="left:201.9px;top:936.1px;height:29px;line-height:29px;font-size:20.5px;letter-spacing:-0.159px;"><span style="color:#4EC9B0">.cctor</span><span style="color:#DCDCDC">() : </span><span style="color:#569CD6">void</span><span style="color:#DCDCDC"> </span><span style="color:#B5CEA8">@06000030</span></div>
<svg style="left:162.2px;top:965.0px" width="28" height="28" viewBox="0 0 16 16"><path d="M7.25 1.2 L13.4 4.5 V10.8 L7.25 14.2 L1 10.8 V4.5 Z" fill="#2E2A36" stroke="#9E76D4" stroke-width="0.9" stroke-linejoin="round"/><path d="M1 4.5 L7.25 7.8 L13.4 4.5 M7.25 7.8 V14.2" fill="none" stroke="#9E76D4" stroke-width="0.9"/></svg>
<div class="u" style="left:201.9px;top:966.1px;height:29px;line-height:29px;font-size:20.5px;letter-spacing:-0.279px;"><span style="color:#4EC9B0">EnterVsDevShellCommand</span><span style="color:#DCDCDC">() : </span><span style="color:#569CD6">void</span><span style="color:#DCDCDC"> </span><span style="color:#B5CEA8">@0600002F</span></div>
<svg style="left:162.2px;top:995.0px" width="28" height="28" viewBox="0 0 16 16"><path d="M5.3 1.2 L10.1 3.8 V10 L5.3 12.8 L0.5 10 V3.8 Z" fill="#2E2A36" stroke="#9E76D4" stroke-width="0.9" stroke-linejoin="round"/><path d="M0.5 3.8 L5.3 6.5 L10.1 3.8 M5.3 6.5 V12.8" fill="none" stroke="#9E76D4" stroke-width="0.9"/><path d="M11.30 8.56 L12.22 10.67 L14.56 10.89 L12.80 12.43 L13.32 14.72 L11.30 13.53 L9.28 14.72 L9.80 12.43 L8.04 10.89 L10.38 10.67 Z" fill="#252526" stroke="#252526" stroke-width="2.4"/><path d="M11.30 8.56 L12.22 10.67 L14.56 10.89 L12.80 12.43 L13.32 14.72 L11.30 13.53 L9.28 14.72 L9.80 12.43 L8.04 10.89 L10.38 10.67 Z" fill="#2A2A2A" stroke="#F1F1F1" stroke-width="0.95" stroke-linejoin="miter"/></svg>
<div class="u" style="left:201.9px;top:996.1px;height:29px;line-height:29px;font-size:20.5px;letter-spacing:-0.27px;"><span style="color:#FF8000">EndProcessing</span><span style="color:#DCDCDC">() : </span><span style="color:#569CD6">void</span><span style="color:#DCDCDC"> </span><span style="color:#B5CEA8">@06000026</span></div>
<svg style="left:162.2px;top:1025.0px" width="28" height="28" viewBox="0 0 16 16"><path d="M5.3 1.2 L10.1 3.8 V10 L5.3 12.8 L0.5 10 V3.8 Z" fill="#2E2A36" stroke="#9E76D4" stroke-width="0.9" stroke-linejoin="round"/><path d="M0.5 3.8 L5.3 6.5 L10.1 3.8 M5.3 6.5 V12.8" fill="none" stroke="#9E76D4" stroke-width="0.9"/><path d="M10.6 10.6 V9.3 A1.65 1.65 0 0 1 13.9 9.3 V10.6" fill="none" stroke="#252526" stroke-width="2.6"/><rect x="9.1" y="10.3" width="6.3" height="5.1" fill="#252526"/><path d="M10.6 10.6 V9.3 A1.65 1.65 0 0 1 13.9 9.3 V10.6" fill="none" stroke="#F1F1F1" stroke-width="1.1"/><rect x="9.6" y="10.8" width="5.3" height="4.1" fill="#3C3C3C" stroke="#F1F1F1" stroke-width="1"/></svg>
<div class="u" style="left:201.9px;top:1026.1px;height:29px;line-height:29px;font-size:20.5px;letter-spacing:-0.284px;"><span style="color:#FF8000">ExecuteTest</span><span style="color:#DCDCDC">() : </span><span style="color:#569CD6">void</span><span style="color:#DCDCDC"> </span><span style="color:#B5CEA8">@06000029</span></div>
<svg style="left:162.2px;top:1055.0px" width="28" height="28" viewBox="0 0 16 16"><path d="M5.3 1.2 L10.1 3.8 V10 L5.3 12.8 L0.5 10 V3.8 Z" fill="#2E2A36" stroke="#9E76D4" stroke-width="0.9" stroke-linejoin="round"/><path d="M0.5 3.8 L5.3 6.5 L10.1 3.8 M5.3 6.5 V12.8" fill="none" stroke="#9E76D4" stroke-width="0.9"/><path d="M10.6 10.6 V9.3 A1.65 1.65 0 0 1 13.9 9.3 V10.6" fill="none" stroke="#252526" stroke-width="2.6"/><rect x="9.1" y="10.3" width="6.3" height="5.1" fill="#252526"/><path d="M10.6 10.6 V9.3 A1.65 1.65 0 0 1 13.9 9.3 V10.6" fill="none" stroke="#F1F1F1" stroke-width="1.1"/><rect x="9.6" y="10.8" width="5.3" height="4.1" fill="#3C3C3C" stroke="#F1F1F1" stroke-width="1"/></svg>
<div class="u" style="left:201.9px;top:1056.1px;height:29px;line-height:29px;font-size:20.5px;letter-spacing:0.035px;"><span style="color:#FF8000">GetSetupConfiguration</span><span style="color:#DCDCDC">() : </span><span style="color:#9B9B82">ISetupConfiguration2</span><span style="color:#DCDCDC"> </span><span style="color:#B5CEA8">@0600002A</span></div>
<svg style="left:162.2px;top:1085.0px" width="28" height="28" viewBox="0 0 16 16"><path d="M5.3 1.2 L10.1 3.8 V10 L5.3 12.8 L0.5 10 V3.8 Z" fill="#2E2A36" stroke="#9E76D4" stroke-width="0.9" stroke-linejoin="round"/><path d="M0.5 3.8 L5.3 6.5 L10.1 3.8 M5.3 6.5 V12.8" fill="none" stroke="#9E76D4" stroke-width="0.9"/><path d="M10.6 10.6 V9.3 A1.65 1.65 0 0 1 13.9 9.3 V10.6" fill="none" stroke="#252526" stroke-width="2.6"/><rect x="9.1" y="10.3" width="6.3" height="5.1" fill="#252526"/><path d="M10.6 10.6 V9.3 A1.65 1.65 0 0 1 13.9 9.3 V10.6" fill="none" stroke="#F1F1F1" stroke-width="1.1"/><rect x="9.6" y="10.8" width="5.3" height="4.1" fill="#3C3C3C" stroke="#F1F1F1" stroke-width="1"/></svg>
<div class="u" style="left:201.9px;top:1086.1px;height:29px;line-height:29px;font-size:20.5px;letter-spacing:-0.052px;"><span style="color:#FF8000">GetSetupInstanceFromInstallPath</span><span style="color:#DCDCDC">(</span><span style="color:#569CD6">string</span><span style="color:#DCDCDC">) : </span><span style="color:#9B9B82">ISetupInstance2</span><span style="color:#DCDCDC"> </span><span style="color:#B5CEA8">@0600002B</span></div>
<svg style="left:162.2px;top:1115.0px" width="28" height="28" viewBox="0 0 16 16"><path d="M5.3 1.2 L10.1 3.8 V10 L5.3 12.8 L0.5 10 V3.8 Z" fill="#2E2A36" stroke="#9E76D4" stroke-width="0.9" stroke-linejoin="round"/><path d="M0.5 3.8 L5.3 6.5 L10.1 3.8 M5.3 6.5 V12.8" fill="none" stroke="#9E76D4" stroke-width="0.9"/><path d="M10.6 10.6 V9.3 A1.65 1.65 0 0 1 13.9 9.3 V10.6" fill="none" stroke="#252526" stroke-width="2.6"/><rect x="9.1" y="10.3" width="6.3" height="5.1" fill="#252526"/><path d="M10.6 10.6 V9.3 A1.65 1.65 0 0 1 13.9 9.3 V10.6" fill="none" stroke="#F1F1F1" stroke-width="1.1"/><rect x="9.6" y="10.8" width="5.3" height="4.1" fill="#3C3C3C" stroke="#F1F1F1" stroke-width="1"/></svg>
<div class="u" style="left:201.9px;top:1116.1px;height:29px;line-height:29px;font-size:20.5px;letter-spacing:-0.033px;"><span style="color:#FF8000">GetSetupInstanceFromInstanceId</span><span style="color:#DCDCDC">(</span><span style="color:#569CD6">string</span><span style="color:#DCDCDC">) : </span><span style="color:#9B9B82">ISetupInstance2</span><span style="color:#DCDCDC"> </span><span style="color:#B5CEA8">@0600002C</span></div>
<svg style="left:162.2px;top:1145.0px" width="28" height="28" viewBox="0 0 16 16"><path d="M5.3 1.2 L10.1 3.8 V10 L5.3 12.8 L0.5 10 V3.8 Z" fill="#2E2A36" stroke="#9E76D4" stroke-width="0.9" stroke-linejoin="round"/><path d="M0.5 3.8 L5.3 6.5 L10.1 3.8 M5.3 6.5 V12.8" fill="none" stroke="#9E76D4" stroke-width="0.9"/><path d="M10.6 10.6 V9.3 A1.65 1.65 0 0 1 13.9 9.3 V10.6" fill="none" stroke="#252526" stroke-width="2.6"/><rect x="9.1" y="10.3" width="6.3" height="5.1" fill="#252526"/><path d="M10.6 10.6 V9.3 A1.65 1.65 0 0 1 13.9 9.3 V10.6" fill="none" stroke="#F1F1F1" stroke-width="1.1"/><rect x="9.6" y="10.8" width="5.3" height="4.1" fill="#3C3C3C" stroke="#F1F1F1" stroke-width="1"/></svg>
<div class="u" style="left:201.9px;top:1146.1px;height:29px;line-height:29px;font-size:20.5px;letter-spacing:0.032px;"><span style="color:#FF8000">GetVsInstallationsFirstOrDefault</span><span style="color:#DCDCDC">(</span><span style="color:#4BC1F0">Func</span><span style="color:#DCDCDC">&lt;</span><span style="color:#9B9B82">ISetupInstance2</span><span style="color:#DCDCDC">, </span><span style="color:#569CD6">bool</span><span style="color:#DCDCDC">&gt;) : </span><span style="color:#9B9B82">ISetupInstance2</span><span style="color:#DCDCDC"> </span><span style="color:#B5CEA8">@0600002D</span></div>
<svg style="left:162.2px;top:1175.0px" width="28" height="28" viewBox="0 0 16 16"><path d="M5.3 1.2 L10.1 3.8 V10 L5.3 12.8 L0.5 10 V3.8 Z" fill="#2E2A36" stroke="#9E76D4" stroke-width="0.9" stroke-linejoin="round"/><path d="M0.5 3.8 L5.3 6.5 L10.1 3.8 M5.3 6.5 V12.8" fill="none" stroke="#9E76D4" stroke-width="0.9"/><path d="M10.6 10.6 V9.3 A1.65 1.65 0 0 1 13.9 9.3 V10.6" fill="none" stroke="#252526" stroke-width="2.6"/><rect x="9.1" y="10.3" width="6.3" height="5.1" fill="#252526"/><path d="M10.6 10.6 V9.3 A1.65 1.65 0 0 1 13.9 9.3 V10.6" fill="none" stroke="#F1F1F1" stroke-width="1.1"/><rect x="9.6" y="10.8" width="5.3" height="4.1" fill="#3C3C3C" stroke="#F1F1F1" stroke-width="1"/></svg>
<div class="u" style="left:201.9px;top:1176.1px;height:29px;line-height:29px;font-size:20.5px;letter-spacing:-0.019px;"><span style="color:#FF8000">NormalizePath</span><span style="color:#DCDCDC">(</span><span style="color:#569CD6">string</span><span style="color:#DCDCDC">) : </span><span style="color:#569CD6">string</span><span style="color:#DCDCDC"> </span><span style="color:#B5CEA8">@06000028</span></div>
<svg style="left:162.2px;top:1205.0px" width="28" height="28" viewBox="0 0 16 16"><path d="M5.3 1.2 L10.1 3.8 V10 L5.3 12.8 L0.5 10 V3.8 Z" fill="#2E2A36" stroke="#9E76D4" stroke-width="0.9" stroke-linejoin="round"/><path d="M0.5 3.8 L5.3 6.5 L10.1 3.8 M5.3 6.5 V12.8" fill="none" stroke="#9E76D4" stroke-width="0.9"/><path d="M10.6 10.6 V9.3 A1.65 1.65 0 0 1 13.9 9.3 V10.6" fill="none" stroke="#252526" stroke-width="2.6"/><rect x="9.1" y="10.3" width="6.3" height="5.1" fill="#252526"/><path d="M10.6 10.6 V9.3 A1.65 1.65 0 0 1 13.9 9.3 V10.6" fill="none" stroke="#F1F1F1" stroke-width="1.1"/><rect x="9.6" y="10.8" width="5.3" height="4.1" fill="#3C3C3C" stroke="#F1F1F1" stroke-width="1"/></svg>
<div class="u" style="left:201.9px;top:1206.1px;height:29px;line-height:29px;font-size:20.5px;letter-spacing:-0.205px;"><span style="color:#FF8000">ResolveDevCmdPath</span><span style="color:#DCDCDC">(</span><span style="color:#9B9B82">ISetupInstance2</span><span style="color:#DCDCDC">) : </span><span style="color:#569CD6">string</span><span style="color:#DCDCDC"> </span><span style="color:#B5CEA8">@06000027</span></div>
<svg style="left:162.2px;top:1235.0px" width="28" height="28" viewBox="0 0 16 16"><path d="M5.3 1.2 L10.1 3.8 V10 L5.3 12.8 L0.5 10 V3.8 Z" fill="#2E2A36" stroke="#9E76D4" stroke-width="0.9" stroke-linejoin="round"/><path d="M0.5 3.8 L5.3 6.5 L10.1 3.8 M5.3 6.5 V12.8" fill="none" stroke="#9E76D4" stroke-width="0.9"/><path d="M10.6 10.6 V9.3 A1.65 1.65 0 0 1 13.9 9.3 V10.6" fill="none" stroke="#252526" stroke-width="2.6"/><rect x="9.1" y="10.3" width="6.3" height="5.1" fill="#252526"/><path d="M10.6 10.6 V9.3 A1.65 1.65 0 0 1 13.9 9.3 V10.6" fill="none" stroke="#F1F1F1" stroke-width="1.1"/><rect x="9.6" y="10.8" width="5.3" height="4.1" fill="#3C3C3C" stroke="#F1F1F1" stroke-width="1"/></svg>
<div class="u" style="left:201.9px;top:1236.1px;height:29px;line-height:29px;font-size:20.5px;letter-spacing:-0.16px;"><span style="color:#FF8000">ValidateDevCmdFilePathOrThrow</span><span style="color:#DCDCDC">(</span><span style="color:#569CD6">string</span><span style="color:#DCDCDC">) : </span><span style="color:#569CD6">void</span><span style="color:#DCDCDC"> </span><span style="color:#B5CEA8">@0600002E</span></div>
<svg style="left:143.6px;top:1268.8px" width="12" height="19" viewBox="0 0 12 19"><path d="M1.2 2 L8.9 9.5 L1.2 17 Z" fill="none" stroke="#F1F1F1" stroke-width="2"/></svg>
<svg style="left:162.2px;top:1265.0px" width="28" height="28" viewBox="0 0 16 16"><path d="M1.2 13.6 L0.6 13 L7.6 6.3 L8.6 7.3 Z" fill="#3C3C3C" stroke="#F1F1F1" stroke-width="1" stroke-linejoin="round"/><path d="M11.2 0.6 A4 4 0 1 0 14.4 5.6 L12.3 6.2 L9.8 5 L9.3 2.6 Z" fill="#E8E8E8" stroke="#E8E8E8" stroke-width="0.5" stroke-linejoin="round"/></svg>
<div class="u" style="left:201.9px;top:1266.1px;height:29px;line-height:29px;font-size:20.5px;letter-spacing:-0.181px;"><span style="color:#2F9E9C">Arch</span><span style="color:#DCDCDC"> : </span><span style="color:#B8D7A3">DevCmdArchValue</span><span style="color:#DCDCDC"> </span><span style="color:#B5CEA8">@1700000B</span></div>
<svg style="left:143.6px;top:1298.8px" width="12" height="19" viewBox="0 0 12 19"><path d="M1.2 2 L8.9 9.5 L1.2 17 Z" fill="none" stroke="#F1F1F1" stroke-width="2"/></svg>
<svg style="left:162.2px;top:1295.0px" width="28" height="28" viewBox="0 0 16 16"><path d="M1.2 13.6 L0.6 13 L7.6 6.3 L8.6 7.3 Z" fill="#3C3C3C" stroke="#F1F1F1" stroke-width="1" stroke-linejoin="round"/><path d="M11.2 0.6 A4 4 0 1 0 14.4 5.6 L12.3 6.2 L9.8 5 L9.3 2.6 Z" fill="#E8E8E8" stroke="#E8E8E8" stroke-width="0.5" stroke-linejoin="round"/></svg>
<div class="u" style="left:201.9px;top:1296.1px;height:29px;line-height:29px;font-size:20.5px;letter-spacing:-0.002px;"><span style="color:#2F9E9C">DevCmdArguments</span><span style="color:#DCDCDC"> : </span><span style="color:#569CD6">string</span><span style="color:#DCDCDC"> </span><span style="color:#B5CEA8">@1700000D</span></div>
<svg style="left:143.6px;top:1328.8px" width="12" height="19" viewBox="0 0 12 19"><path d="M1.2 2 L8.9 9.5 L1.2 17 Z" fill="none" stroke="#F1F1F1" stroke-width="2"/></svg>
<svg style="left:162.2px;top:1325.0px" width="28" height="28" viewBox="0 0 16 16"><path d="M1.2 13.6 L0.6 13 L7.6 6.3 L8.6 7.3 Z" fill="#3C3C3C" stroke="#F1F1F1" stroke-width="1" stroke-linejoin="round"/><path d="M11.2 0.6 A4 4 0 1 0 14.4 5.6 L12.3 6.2 L9.8 5 L9.3 2.6 Z" fill="#E8E8E8" stroke="#E8E8E8" stroke-width="0.5" stroke-linejoin="round"/></svg>
<div class="u" style="left:201.9px;top:1326.1px;height:29px;line-height:29px;font-size:20.5px;letter-spacing:-0.204px;"><span style="color:#2F9E9C">DevCmdDebugLevel</span><span style="color:#DCDCDC"> : </span><span style="color:#B8D7A3">DevCmdDebugLevelValue</span><span style="color:#DCDCDC"> </span><span style="color:#B5CEA8">@1700000F</span></div>
<svg style="left:143.6px;top:1358.8px" width="12" height="19" viewBox="0 0 12 19"><path d="M1.2 2 L8.9 9.5 L1.2 17 Z" fill="none" stroke="#F1F1F1" stroke-width="2"/></svg>
<svg style="left:162.2px;top:1355.0px" width="28" height="28" viewBox="0 0 16 16"><path d="M1.2 13.6 L0.6 13 L7.6 6.3 L8.6 7.3 Z" fill="#3C3C3C" stroke="#F1F1F1" stroke-width="1" stroke-linejoin="round"/><path d="M11.2 0.6 A4 4 0 1 0 14.4 5.6 L12.3 6.2 L9.8 5 L9.3 2.6 Z" fill="#E8E8E8" stroke="#E8E8E8" stroke-width="0.5" stroke-linejoin="round"/></svg>
<div class="u" style="left:201.9px;top:1356.1px;height:29px;line-height:29px;font-size:20.5px;letter-spacing:-0.109px;"><span style="color:#2F9E9C">HostArch</span><span style="color:#DCDCDC"> : </span><span style="color:#B8D7A3">DevCmdHostArchValue</span><span style="color:#DCDCDC"> </span><span style="color:#B5CEA8">@1700000C</span></div>
<svg style="left:143.6px;top:1388.8px" width="12" height="19" viewBox="0 0 12 19"><path d="M1.2 2 L8.9 9.5 L1.2 17 Z" fill="none" stroke="#F1F1F1" stroke-width="2"/></svg>
<svg style="left:162.2px;top:1385.0px" width="28" height="28" viewBox="0 0 16 16"><path d="M1.2 13.6 L0.6 13 L7.6 6.3 L8.6 7.3 Z" fill="#3C3C3C" stroke="#F1F1F1" stroke-width="1" stroke-linejoin="round"/><path d="M11.2 0.6 A4 4 0 1 0 14.4 5.6 L12.3 6.2 L9.8 5 L9.3 2.6 Z" fill="#E8E8E8" stroke="#E8E8E8" stroke-width="0.5" stroke-linejoin="round"/></svg>
<div class="u" style="left:201.9px;top:1386.1px;height:29px;line-height:29px;font-size:20.5px;letter-spacing:-0.108px;"><span style="color:#2F9E9C">ReportNewInstanceType</span><span style="color:#DCDCDC"> : </span><span style="color:#B8D7A3">NewInstanceType</span><span style="color:#DCDCDC"> </span><span style="color:#B5CEA8">@17000012</span></div>
<svg style="left:143.6px;top:1418.8px" width="12" height="19" viewBox="0 0 12 19"><path d="M1.2 2 L8.9 9.5 L1.2 17 Z" fill="none" stroke="#F1F1F1" stroke-width="2"/></svg>
<svg style="left:162.2px;top:1415.0px" width="28" height="28" viewBox="0 0 16 16"><path d="M1.2 13.6 L0.6 13 L7.6 6.3 L8.6 7.3 Z" fill="#3C3C3C" stroke="#F1F1F1" stroke-width="1" stroke-linejoin="round"/><path d="M11.2 0.6 A4 4 0 1 0 14.4 5.6 L12.3 6.2 L9.8 5 L9.3 2.6 Z" fill="#E8E8E8" stroke="#E8E8E8" stroke-width="0.5" stroke-linejoin="round"/></svg>
<div class="u" style="left:201.9px;top:1416.1px;height:29px;line-height:29px;font-size:20.5px;letter-spacing:0.002px;"><span style="color:#2F9E9C">SetDefaultWindowTitle</span><span style="color:#DCDCDC"> : </span><span style="color:#009933">SwitchParameter</span><span style="color:#DCDCDC"> </span><span style="color:#B5CEA8">@17000011</span></div>
<svg style="left:143.6px;top:1448.8px" width="12" height="19" viewBox="0 0 12 19"><path d="M1.2 2 L8.9 9.5 L1.2 17 Z" fill="none" stroke="#F1F1F1" stroke-width="2"/></svg>
<svg style="left:162.2px;top:1445.0px" width="28" height="28" viewBox="0 0 16 16"><path d="M1.2 13.6 L0.6 13 L7.6 6.3 L8.6 7.3 Z" fill="#3C3C3C" stroke="#F1F1F1" stroke-width="1" stroke-linejoin="round"/><path d="M11.2 0.6 A4 4 0 1 0 14.4 5.6 L12.3 6.2 L9.8 5 L9.3 2.6 Z" fill="#E8E8E8" stroke="#E8E8E8" stroke-width="0.5" stroke-linejoin="round"/></svg>
<div class="u" style="left:201.9px;top:1446.1px;height:29px;line-height:29px;font-size:20.5px;letter-spacing:-0.045px;"><span style="color:#2F9E9C">SkipAutomaticLocation</span><span style="color:#DCDCDC"> : </span><span style="color:#009933">SwitchParameter</span><span style="color:#DCDCDC"> </span><span style="color:#B5CEA8">@17000010</span></div>
<svg style="left:143.6px;top:1478.8px" width="12" height="19" viewBox="0 0 12 19"><path d="M1.2 2 L8.9 9.5 L1.2 17 Z" fill="none" stroke="#F1F1F1" stroke-width="2"/></svg>
<svg style="left:162.2px;top:1475.0px" width="28" height="28" viewBox="0 0 16 16"><path d="M1.2 13.6 L0.6 13 L7.6 6.3 L8.6 7.3 Z" fill="#3C3C3C" stroke="#F1F1F1" stroke-width="1" stroke-linejoin="round"/><path d="M11.2 0.6 A4 4 0 1 0 14.4 5.6 L12.3 6.2 L9.8 5 L9.3 2.6 Z" fill="#E8E8E8" stroke="#E8E8E8" stroke-width="0.5" stroke-linejoin="round"/></svg>
<div class="u" style="left:201.9px;top:1476.1px;height:29px;line-height:29px;font-size:20.5px;letter-spacing:-0.156px;"><span style="color:#2F9E9C">SkipExistingEnvironmentVariables</span><span style="color:#DCDCDC"> : </span><span style="color:#009933">SwitchParameter</span><span style="color:#DCDCDC"> </span><span style="color:#B5CEA8">@17000009</span></div>
<svg style="left:143.6px;top:1508.8px" width="12" height="19" viewBox="0 0 12 19"><path d="M1.2 2 L8.9 9.5 L1.2 17 Z" fill="none" stroke="#F1F1F1" stroke-width="2"/></svg>
<svg style="left:162.2px;top:1505.0px" width="28" height="28" viewBox="0 0 16 16"><path d="M1.2 13.6 L0.6 13 L7.6 6.3 L8.6 7.3 Z" fill="#3C3C3C" stroke="#F1F1F1" stroke-width="1" stroke-linejoin="round"/><path d="M11.2 0.6 A4 4 0 1 0 14.4 5.6 L12.3 6.2 L9.8 5 L9.3 2.6 Z" fill="#E8E8E8" stroke="#E8E8E8" stroke-width="0.5" stroke-linejoin="round"/></svg>
<div class="u" style="left:201.9px;top:1506.1px;height:29px;line-height:29px;font-size:20.5px;letter-spacing:-0.105px;"><span style="color:#2F9E9C">StartInPath</span><span style="color:#DCDCDC"> : </span><span style="color:#569CD6">string</span><span style="color:#DCDCDC"> </span><span style="color:#B5CEA8">@1700000A</span></div>
<svg style="left:143.6px;top:1538.8px" width="12" height="19" viewBox="0 0 12 19"><path d="M1.2 2 L8.9 9.5 L1.2 17 Z" fill="none" stroke="#F1F1F1" stroke-width="2"/></svg>
<svg style="left:162.2px;top:1535.0px" width="28" height="28" viewBox="0 0 16 16"><path d="M1.2 13.6 L0.6 13 L7.6 6.3 L8.6 7.3 Z" fill="#3C3C3C" stroke="#F1F1F1" stroke-width="1" stroke-linejoin="round"/><path d="M11.2 0.6 A4 4 0 1 0 14.4 5.6 L12.3 6.2 L9.8 5 L9.3 2.6 Z" fill="#E8E8E8" stroke="#E8E8E8" stroke-width="0.5" stroke-linejoin="round"/></svg>
<div class="u" style="left:201.9px;top:1536.1px;height:29px;line-height:29px;font-size:20.5px;letter-spacing:-0.331px;"><span style="color:#2F9E9C">Test</span><span style="color:#DCDCDC"> : </span><span style="color:#009933">SwitchParameter</span><span style="color:#DCDCDC"> </span><span style="color:#B5CEA8">@1700000E</span></div>
<svg style="left:143.6px;top:1568.8px" width="12" height="19" viewBox="0 0 12 19"><path d="M1.2 2 L8.9 9.5 L1.2 17 Z" fill="none" stroke="#F1F1F1" stroke-width="2"/></svg>
<svg style="left:162.2px;top:1565.0px" width="28" height="28" viewBox="0 0 16 16"><path d="M1.2 13.6 L0.6 13 L7.6 6.3 L8.6 7.3 Z" fill="#3C3C3C" stroke="#F1F1F1" stroke-width="1" stroke-linejoin="round"/><path d="M11.2 0.6 A4 4 0 1 0 14.4 5.6 L12.3 6.2 L9.8 5 L9.3 2.6 Z" fill="#E8E8E8" stroke="#E8E8E8" stroke-width="0.5" stroke-linejoin="round"/></svg>
<div class="u" style="left:201.9px;top:1566.1px;height:29px;line-height:29px;font-size:20.5px;letter-spacing:-0.154px;"><span style="color:#2F9E9C">VsInstallPath</span><span style="color:#DCDCDC"> : </span><span style="color:#569CD6">string</span><span style="color:#DCDCDC"> </span><span style="color:#B5CEA8">@17000007</span></div>
<svg style="left:143.6px;top:1598.8px" width="12" height="19" viewBox="0 0 12 19"><path d="M1.2 2 L8.9 9.5 L1.2 17 Z" fill="none" stroke="#F1F1F1" stroke-width="2"/></svg>
<svg style="left:162.2px;top:1595.0px" width="28" height="28" viewBox="0 0 16 16"><path d="M1.2 13.6 L0.6 13 L7.6 6.3 L8.6 7.3 Z" fill="#3C3C3C" stroke="#F1F1F1" stroke-width="1" stroke-linejoin="round"/><path d="M11.2 0.6 A4 4 0 1 0 14.4 5.6 L12.3 6.2 L9.8 5 L9.3 2.6 Z" fill="#E8E8E8" stroke="#E8E8E8" stroke-width="0.5" stroke-linejoin="round"/></svg>
<div class="u" style="left:201.9px;top:1596.1px;height:29px;line-height:29px;font-size:20.5px;letter-spacing:-0.122px;"><span style="color:#2F9E9C">VsInstanceId</span><span style="color:#DCDCDC"> : </span><span style="color:#569CD6">string</span><span style="color:#DCDCDC"> </span><span style="color:#B5CEA8">@17000008</span></div>
<svg style="left:162.2px;top:1625.0px" width="28" height="28" viewBox="0 0 16 16"><path d="M0.6 6.5 L9.1 0.85 L13.3 4.9 V8.7 L4.9 13.7 L0.6 10.35 Z" fill="#232E3D" stroke="#4DA6F5" stroke-width="1" stroke-linejoin="round"/><path d="M0.6 6.5 L9.1 0.85 L13.3 4.9 L4.9 10.1 Z" fill="#2E3D50" stroke="#4DA6F5" stroke-width="1" stroke-linejoin="round"/><path d="M4.9 10.1 V13.7" stroke="#4DA6F5" stroke-width="1"/><path d="M10.6 10.6 V9.3 A1.65 1.65 0 0 1 13.9 9.3 V10.6" fill="none" stroke="#252526" stroke-width="2.6"/><rect x="9.1" y="10.3" width="6.3" height="5.1" fill="#252526"/><path d="M10.6 10.6 V9.3 A1.65 1.65 0 0 1 13.9 9.3 V10.6" fill="none" stroke="#F1F1F1" stroke-width="1.1"/><rect x="9.6" y="10.8" width="5.3" height="4.1" fill="#3C3C3C" stroke="#F1F1F1" stroke-width="1"/></svg>
<div class="u" style="left:201.9px;top:1626.1px;height:29px;line-height:29px;font-size:20.5px;letter-spacing:-0.141px;"><span style="color:#8D8FC6">DebugOutputRegex</span><span style="color:#DCDCDC"> : </span><span style="color:#4EC9B0">Regex</span><span style="color:#DCDCDC"> </span><span style="color:#B5CEA8">@04000024</span></div>
<svg style="left:162.2px;top:1655.0px" width="28" height="28" viewBox="0 0 16 16"><rect x="1.8" y="3.1" width="8.9" height="7.8" fill="#3C3C3C" stroke="#F1F1F1" stroke-width="1"/><path d="M4 6.2 H8.5 M4 8.1 H8.5" stroke="#55AAFF" stroke-width="1.1"/><path d="M10.6 10.6 V9.3 A1.65 1.65 0 0 1 13.9 9.3 V10.6" fill="none" stroke="#252526" stroke-width="2.6"/><rect x="9.1" y="10.3" width="6.3" height="5.1" fill="#252526"/><path d="M10.6 10.6 V9.3 A1.65 1.65 0 0 1 13.9 9.3 V10.6" fill="none" stroke="#F1F1F1" stroke-width="1.1"/><rect x="9.6" y="10.8" width="5.3" height="4.1" fill="#3C3C3C" stroke="#F1F1F1" stroke-width="1"/></svg>
<div class="u" style="left:201.9px;top:1656.1px;height:29px;line-height:29px;font-size:20.5px;letter-spacing:-0.235px;"><span style="color:#C563F0">DevCmdBatchFile</span><span style="color:#DCDCDC"> : </span><span style="color:#569CD6">string</span><span style="color:#DCDCDC"> </span><span style="color:#B5CEA8">@0400001F</span></div>
<svg style="left:162.2px;top:1685.0px" width="28" height="28" viewBox="0 0 16 16"><rect x="1.8" y="3.1" width="8.9" height="7.8" fill="#3C3C3C" stroke="#F1F1F1" stroke-width="1"/><path d="M4 6.2 H8.5 M4 8.1 H8.5" stroke="#55AAFF" stroke-width="1.1"/><path d="M10.6 10.6 V9.3 A1.65 1.65 0 0 1 13.9 9.3 V10.6" fill="none" stroke="#252526" stroke-width="2.6"/><rect x="9.1" y="10.3" width="6.3" height="5.1" fill="#252526"/><path d="M10.6 10.6 V9.3 A1.65 1.65 0 0 1 13.9 9.3 V10.6" fill="none" stroke="#F1F1F1" stroke-width="1.1"/><rect x="9.6" y="10.8" width="5.3" height="4.1" fill="#3C3C3C" stroke="#F1F1F1" stroke-width="1"/></svg>
<div class="u" style="left:201.9px;top:1686.1px;height:29px;line-height:29px;font-size:20.5px;letter-spacing:-0.15px;"><span style="color:#C563F0">DevCmdDebugEnvVar</span><span style="color:#DCDCDC"> : </span><span style="color:#569CD6">string</span><span style="color:#DCDCDC"> </span><span style="color:#B5CEA8">@04000020</span></div>
<svg style="left:162.2px;top:1715.0px" width="28" height="28" viewBox="0 0 16 16"><rect x="1.8" y="3.1" width="8.9" height="7.8" fill="#3C3C3C" stroke="#F1F1F1" stroke-width="1"/><path d="M4 6.2 H8.5 M4 8.1 H8.5" stroke="#55AAFF" stroke-width="1.1"/><path d="M10.6 10.6 V9.3 A1.65 1.65 0 0 1 13.9 9.3 V10.6" fill="none" stroke="#252526" stroke-width="2.6"/><rect x="9.1" y="10.3" width="6.3" height="5.1" fill="#252526"/><path d="M10.6 10.6 V9.3 A1.65 1.65 0 0 1 13.9 9.3 V10.6" fill="none" stroke="#F1F1F1" stroke-width="1.1"/><rect x="9.6" y="10.8" width="5.3" height="4.1" fill="#3C3C3C" stroke="#F1F1F1" stroke-width="1"/></svg>
<div class="u" style="left:201.9px;top:1716.1px;height:29px;line-height:29px;font-size:20.5px;letter-spacing:-0.199px;"><span style="color:#C563F0">DevCmdShellNameEnvVar</span><span style="color:#DCDCDC"> : </span><span style="color:#569CD6">string</span><span style="color:#DCDCDC"> </span><span style="color:#B5CEA8">@04000021</span></div>
<svg style="left:162.2px;top:1745.0px" width="28" height="28" viewBox="0 0 16 16"><rect x="1.8" y="3.1" width="8.9" height="7.8" fill="#3C3C3C" stroke="#F1F1F1" stroke-width="1"/><path d="M4 6.2 H8.5 M4 8.1 H8.5" stroke="#55AAFF" stroke-width="1.1"/><path d="M10.6 10.6 V9.3 A1.65 1.65 0 0 1 13.9 9.3 V10.6" fill="none" stroke="#252526" stroke-width="2.6"/><rect x="9.1" y="10.3" width="6.3" height="5.1" fill="#252526"/><path d="M10.6 10.6 V9.3 A1.65 1.65 0 0 1 13.9 9.3 V10.6" fill="none" stroke="#F1F1F1" stroke-width="1.1"/><rect x="9.6" y="10.8" width="5.3" height="4.1" fill="#3C3C3C" stroke="#F1F1F1" stroke-width="1"/></svg>
<div class="u" style="left:201.9px;top:1746.1px;height:29px;line-height:29px;font-size:20.5px;letter-spacing:-0.21px;"><span style="color:#C563F0">DevCmdSkipTelemetryEnvVar</span><span style="color:#DCDCDC"> : </span><span style="color:#569CD6">string</span><span style="color:#DCDCDC"> </span><span style="color:#B5CEA8">@04000023</span></div>
<svg style="left:162.2px;top:1775.0px" width="28" height="28" viewBox="0 0 16 16"><path d="M0.6 6.5 L9.1 0.85 L13.3 4.9 V8.7 L4.9 13.7 L0.6 10.35 Z" fill="#232E3D" stroke="#4DA6F5" stroke-width="1" stroke-linejoin="round"/><path d="M0.6 6.5 L9.1 0.85 L13.3 4.9 L4.9 10.1 Z" fill="#2E3D50" stroke="#4DA6F5" stroke-width="1" stroke-linejoin="round"/><path d="M4.9 10.1 V13.7" stroke="#4DA6F5" stroke-width="1"/><path d="M10.6 10.6 V9.3 A1.65 1.65 0 0 1 13.9 9.3 V10.6" fill="none" stroke="#252526" stroke-width="2.6"/><rect x="9.1" y="10.3" width="6.3" height="5.1" fill="#252526"/><path d="M10.6 10.6 V9.3 A1.65 1.65 0 0 1 13.9 9.3 V10.6" fill="none" stroke="#F1F1F1" stroke-width="1.1"/><rect x="9.6" y="10.8" width="5.3" height="4.1" fill="#3C3C3C" stroke="#F1F1F1" stroke-width="1"/></svg>
<div class="u" style="left:201.9px;top:1776.1px;height:29px;line-height:29px;font-size:20.5px;letter-spacing:-0.501px;"><span style="color:#8D8FC6">EnvVarRegex</span><span style="color:#DCDCDC"> : </span><span style="color:#4EC9B0">Regex</span><span style="color:#DCDCDC"> </span><span style="color:#B5CEA8">@04000026</span></div>
<svg style="left:162.2px;top:1805.0px" width="28" height="28" viewBox="0 0 16 16"><path d="M0.6 6.5 L9.1 0.85 L13.3 4.9 V8.7 L4.9 13.7 L0.6 10.35 Z" fill="#232E3D" stroke="#4DA6F5" stroke-width="1" stroke-linejoin="round"/><path d="M0.6 6.5 L9.1 0.85 L13.3 4.9 L4.9 10.1 Z" fill="#2E3D50" stroke="#4DA6F5" stroke-width="1" stroke-linejoin="round"/><path d="M4.9 10.1 V13.7" stroke="#4DA6F5" stroke-width="1"/><path d="M10.6 10.6 V9.3 A1.65 1.65 0 0 1 13.9 9.3 V10.6" fill="none" stroke="#252526" stroke-width="2.6"/><rect x="9.1" y="10.3" width="6.3" height="5.1" fill="#252526"/><path d="M10.6 10.6 V9.3 A1.65 1.65 0 0 1 13.9 9.3 V10.6" fill="none" stroke="#F1F1F1" stroke-width="1.1"/><rect x="9.6" y="10.8" width="5.3" height="4.1" fill="#3C3C3C" stroke="#F1F1F1" stroke-width="1"/></svg>
<div class="u" style="left:201.9px;top:1806.1px;height:29px;line-height:29px;font-size:20.5px;letter-spacing:-0.241px;"><span style="color:#8D8FC6">ErrorOutputRegex</span><span style="color:#DCDCDC"> : </span><span style="color:#4EC9B0">Regex</span><span style="color:#DCDCDC"> </span><span style="color:#B5CEA8">@04000025</span></div>
<svg style="left:162.2px;top:1835.0px" width="28" height="28" viewBox="0 0 16 16"><rect x="1.8" y="3.1" width="8.9" height="7.8" fill="#3C3C3C" stroke="#F1F1F1" stroke-width="1"/><path d="M4 6.2 H8.5 M4 8.1 H8.5" stroke="#55AAFF" stroke-width="1.1"/><path d="M10.6 10.6 V9.3 A1.65 1.65 0 0 1 13.9 9.3 V10.6" fill="none" stroke="#252526" stroke-width="2.6"/><rect x="9.1" y="10.3" width="6.3" height="5.1" fill="#252526"/><path d="M10.6 10.6 V9.3 A1.65 1.65 0 0 1 13.9 9.3 V10.6" fill="none" stroke="#F1F1F1" stroke-width="1.1"/><rect x="9.6" y="10.8" width="5.3" height="4.1" fill="#3C3C3C" stroke="#F1F1F1" stroke-width="1"/></svg>
<div class="u" style="left:201.9px;top:1836.1px;height:29px;line-height:29px;font-size:20.5px;letter-spacing:-0.263px;"><span style="color:#C563F0">ResourceBaseName</span><span style="color:#DCDCDC"> : </span><span style="color:#569CD6">string</span><span style="color:#DCDCDC"> </span><span style="color:#B5CEA8">@04000022</span></div>
<svg style="left:143.6px;top:1868.8px" width="12" height="19" viewBox="0 0 12 19"><path d="M1.2 2 L8.9 9.5 L1.2 17 Z" fill="none" stroke="#F1F1F1" stroke-width="2"/></svg>
<svg style="left:162.2px;top:1865.0px" width="28" height="28" viewBox="0 0 16 16"><g transform="translate(0.4 0.6) scale(0.7)" fill="#4A4438" stroke="#F6DFA0" stroke-width="1.43" stroke-linejoin="miter"><path d="M7.9 5.3 V11.4 H10.6 M7.9 6.4 H10.6" fill="none"/><path d="M4.55 -0.1 L8.2 3.1 L2.75 8 L-0.5 4.7 Z"/><path d="M12.8 3.8 L15.2 6.2 L12.8 8.6 L10.4 6.2 Z"/><path d="M12.4 9.8 L14.8 12.2 L12.4 14.6 L10 12.2 Z"/></g><path d="M10.6 10.6 V9.3 A1.65 1.65 0 0 1 13.9 9.3 V10.6" fill="none" stroke="#252526" stroke-width="2.6"/><rect x="9.1" y="10.3" width="6.3" height="5.1" fill="#252526"/><path d="M10.6 10.6 V9.3 A1.65 1.65 0 0 1 13.9 9.3 V10.6" fill="none" stroke="#F1F1F1" stroke-width="1.1"/><rect x="9.6" y="10.8" width="5.3" height="4.1" fill="#3C3C3C" stroke="#F1F1F1" stroke-width="1"/></svg>
<div class="u" style="left:201.9px;top:1866.1px;height:29px;line-height:29px;font-size:20.5px;letter-spacing:-0.284px;"><span style="color:#3E9C7A">ErrorId</span><span style="color:#DCDCDC"> </span><span style="color:#B5CEA8">@02000016</span></div>
<svg style="left:143.6px;top:1898.8px" width="12" height="19" viewBox="0 0 12 19"><path d="M1.2 2 L8.9 9.5 L1.2 17 Z" fill="none" stroke="#F1F1F1" stroke-width="2"/></svg>
<svg style="left:162.2px;top:1895.0px" width="28" height="28" viewBox="0 0 16 16"><g transform="translate(0.4 0.6) scale(0.7)" fill="#4A4438" stroke="#F6DFA0" stroke-width="1.43" stroke-linejoin="miter"><path d="M7.9 5.3 V11.4 H10.6 M7.9 6.4 H10.6" fill="none"/><path d="M4.55 -0.1 L8.2 3.1 L2.75 8 L-0.5 4.7 Z"/><path d="M12.8 3.8 L15.2 6.2 L12.8 8.6 L10.4 6.2 Z"/><path d="M12.4 9.8 L14.8 12.2 L12.4 14.6 L10 12.2 Z"/></g><path d="M10.6 10.6 V9.3 A1.65 1.65 0 0 1 13.9 9.3 V10.6" fill="none" stroke="#252526" stroke-width="2.6"/><rect x="9.1" y="10.3" width="6.3" height="5.1" fill="#252526"/><path d="M10.6 10.6 V9.3 A1.65 1.65 0 0 1 13.9 9.3 V10.6" fill="none" stroke="#F1F1F1" stroke-width="1.1"/><rect x="9.6" y="10.8" width="5.3" height="4.1" fill="#3C3C3C" stroke="#F1F1F1" stroke-width="1"/></svg>
<div class="u" style="left:201.9px;top:1896.1px;height:29px;line-height:29px;font-size:20.5px;letter-spacing:-0.359px;"><span style="color:#3E9C7A">ParameterSet</span><span style="color:#DCDCDC"> </span><span style="color:#B5CEA8">@02000017</span></div>
</div>
<div class="r" style="left:896.0px;top:109.0px;width:295.0px;height:44.0px;background:#3F3F46;"></div>
<div class="r" style="left:896.0px;top:149.0px;width:2930.0px;height:4.0px;background:#3F3F46;"></div>
<div class="u" style="left:904.3px;top:116.0px;height:29px;line-height:29px;font-size:20.5px;color:#F1F1F1;letter-spacing:-0.297px;">EnterVsDevShellCommand</div>
<svg style="left:1164px;top:120px" width="18" height="18" viewBox="0 0 18 18"><path d="M1.5 1.5 L16 15.5 M16 1.5 L1.5 15.5" stroke="#6D6D70" stroke-width="2.2" fill="none"/></svg>
<div class="r" style="left:896.0px;top:153.0px;width:30.0px;height:1283.0px;background:#333333;"></div>
<div class="r" style="left:926.0px;top:153.0px;width:2870.0px;height:1283.0px;background:#1E1E1E;"></div>
<div class="r" style="left:3796.0px;top:153.0px;width:30.0px;height:1283.0px;background:#3E3E42;"></div>
<svg style="left:3803px;top:164px" width="16" height="10" viewBox="0 0 16 10"><path d="M0 9.5 L8 0.5 L16 9.5 Z" fill="#999999"/></svg>
<div class="r" style="left:3803.0px;top:500.0px;width:16.0px;height:102.0px;background:#686868;"></div>
<svg style="left:3803px;top:1417px" width="16" height="10" viewBox="0 0 16 10"><path d="M0 0.5 L8 9.5 L16 0.5 Z" fill="#999999"/></svg>
<div class="r" style="left:896.0px;top:1436.0px;width:2930.0px;height:31.0px;background:#3E3E42;"></div>
<div class="r" style="left:898.0px;top:1438.0px;width:102.0px;height:27.0px;background:#434346;"></div>
<div class="r" style="left:900.0px;top:1440.0px;width:77.0px;height:23.0px;background:#252526;"></div>
<div class="r" style="left:979.0px;top:1440.0px;width:19.0px;height:23.0px;background:#2D2D30;"></div>
<div class="u" style="left:906.0px;top:1439.7px;height:27px;line-height:27px;font-size:19.5px;color:#F1F1F1;">100 %</div>
<svg style="left:984px;top:1449px" width="11" height="6" viewBox="0 0 11 6"><path d="M0 0 H11 L5.5 6 Z" fill="#999999"/></svg>
<svg style="left:1013px;top:1444px" width="9" height="16" viewBox="0 0 9 16"><path d="M8.5 0 L0.5 8 L8.5 16 Z" fill="#555558"/></svg>
<svg style="left:3776px;top:1444px" width="9" height="16" viewBox="0 0 9 16"><path d="M0.5 0 L8.5 8 L0.5 16 Z" fill="#555558"/></svg>
<div class="clip" style="left:926px;top:153px;width:2870px;height:1283px">
<div class="r" style="left:96px;top:627.2px;width:2774px;height:29.6px;box-sizing:border-box;border:3.5px solid #464646;"></div>
<div class="r" style="left:256.0px;top:627.2px;width:977.0px;height:29.6px;background:#DBCF6C;"></div>
<div class="r" style="left:99.0px;top:657.0px;width:185.0px;height:23.1px;background:#DBCF6C;"></div>
<div class="r" style="left:99.0px;top:679.8px;width:510.0px;height:30.1px;background:#DBCF6C;"></div>
<div class="r" style="left:99.0px;top:709.5px;width:536.0px;height:30.1px;background:#DBCF6C;"></div>
<div class="r" style="left:99.0px;top:739.3px;width:601.0px;height:30.1px;background:#DBCF6C;"></div>
<div class="r" style="left:99.0px;top:769.0px;width:183.0px;height:22.8px;background:#DBCF6C;"></div>
<div class="r" style="left:255.5px;top:627.0px;width:208.5px;height:29.7px;background:#38648A;box-sizing:border-box;border:1px solid #8AA4BE;"></div>
<svg style="left:104.5px;top:0.0px" width="2" height="1283.0"><line x1="1" y1="0" x2="1" y2="1283.0" stroke="#5A5A5A" stroke-width="1.75" stroke-dasharray="5.25 5.25" stroke-dashoffset="5.50"/></svg>
<svg style="left:157.0px;top:0.0px" width="2" height="1283.0"><line x1="1" y1="0" x2="1" y2="1283.0" stroke="#1E6E5E" stroke-width="1.75" stroke-dasharray="5.25 5.25" stroke-dashoffset="5.50"/></svg>
<svg style="left:209.5px;top:0.0px" width="2" height="1283.0"><line x1="1" y1="0" x2="1" y2="1283.0" stroke="#1F4E79" stroke-width="1.75" stroke-dasharray="5.25 5.25" stroke-dashoffset="5.50"/></svg>
<svg style="left:260.0px;top:0.0px" width="2" height="37.6"><line x1="1" y1="0" x2="1" y2="37.6" stroke="#1E501E" stroke-width="1.75" stroke-dasharray="5.25 5.25" stroke-dashoffset="5.50"/></svg>
<svg style="left:260.0px;top:172.3px" width="2" height="29.8"><line x1="1" y1="0" x2="1" y2="29.8" stroke="#1E501E" stroke-width="1.75" stroke-dasharray="5.25 5.25" stroke-dashoffset="9.80"/></svg>
<svg style="left:260.0px;top:277.3px" width="2" height="29.8"><line x1="1" y1="0" x2="1" y2="29.8" stroke="#1E501E" stroke-width="1.75" stroke-dasharray="5.25 5.25" stroke-dashoffset="9.80"/></svg>
<svg style="left:260.0px;top:679.8px" width="2" height="89.2"><line x1="1" y1="0" x2="1" y2="89.2" stroke="#45454F" stroke-width="1.75" stroke-dasharray="5.25 5.25" stroke-dashoffset="2.80"/></svg>
<svg style="left:260.0px;top:844.3px" width="2" height="29.8"><line x1="1" y1="0" x2="1" y2="29.8" stroke="#1E501E" stroke-width="1.75" stroke-dasharray="5.25 5.25" stroke-dashoffset="9.80"/></svg>
<svg style="left:260.0px;top:949.3px" width="2" height="29.8"><line x1="1" y1="0" x2="1" y2="29.8" stroke="#1E501E" stroke-width="1.75" stroke-dasharray="5.25 5.25" stroke-dashoffset="9.80"/></svg>
<svg style="left:260.0px;top:1143.5px" width="2" height="139.5"><line x1="1" y1="0" x2="1" y2="139.5" stroke="#5A5A5A" stroke-width="1.75" stroke-dasharray="5.25 5.25" stroke-dashoffset="4.55"/></svg>
<svg style="left:313.0px;top:1255.5px" width="2" height="27.5"><line x1="1" y1="0" x2="1" y2="27.5" stroke="#8B3FA0" stroke-width="1.75" stroke-dasharray="5.25 5.25" stroke-dashoffset="1.05"/></svg>
<div class="c ln" style="left:27px;top:-19.42px">139</div>
<div class="c" style="left:256.0px;top:-19.75px"><span style="color:#DCDCDC">{</span></div>
<div class="c ln" style="left:27px;top:8.58px">140</div>
<div class="c" style="left:308.0px;top:8.25px"><span style="color:#DCDCDC">setupInstance</span><span style="color:#B4B4B4"> = </span><span style="color:#569CD6">this</span><span style="color:#B4B4B4">.</span><span style="color:#FF8000">GetSetupInstanceFromInstallPath</span><span style="color:#DCDCDC">(</span><span style="color:#569CD6">this</span><span style="color:#B4B4B4">.</span><span style="color:#2F9E9C">VsInstallPath</span><span style="color:#DCDCDC">);</span></div>
<div class="c ln" style="left:27px;top:33.08px">141</div>
<div class="c" style="left:256.0px;top:32.75px"><span style="color:#DCDCDC">}</span></div>
<div class="c ln" style="left:27px;top:61.08px">142</div>
<div class="c" style="left:256.0px;top:60.75px"><span style="color:#569CD6">string</span><span style="color:#DCDCDC"> text</span><span style="color:#B4B4B4"> = </span><span style="color:#4EC9B0">EnterVsDevShellCommand</span><span style="color:#B4B4B4">.</span><span style="color:#FF8000">ResolveDevCmdPath</span><span style="color:#DCDCDC">(setupInstance);</span></div>
<div class="c ln" style="left:27px;top:90.83px">143</div>
<div class="c" style="left:256.0px;top:90.50px"><span style="color:#569CD6">this</span><span style="color:#B4B4B4">.</span><span style="color:#FF8000">ValidateDevCmdFilePathOrThrow</span><span style="color:#DCDCDC">(text);</span></div>
<div class="c ln" style="left:27px;top:120.58px">144</div>
<div class="c" style="left:256.0px;top:120.25px"><span style="color:#569CD6">if</span><span style="color:#DCDCDC"> (</span><span style="color:#569CD6">this</span><span style="color:#B4B4B4">.</span><span style="color:#2F9E9C">Arch</span><span style="color:#B4B4B4"> != </span><span style="color:#B8D7A3">DevCmdArchValue</span><span style="color:#B4B4B4">.</span><span style="color:#BD63C5">Default</span><span style="color:#DCDCDC">)</span></div>
<div class="c ln" style="left:27px;top:145.08px">145</div>
<div class="c" style="left:256.0px;top:144.75px"><span style="color:#DCDCDC">{</span></div>
<div class="c ln" style="left:27px;top:173.08px">146</div>
<div class="c" style="left:308.0px;top:172.75px"><span style="color:#569CD6">this</span><span style="color:#B4B4B4">.</span><span style="color:#2F9E9C">DevCmdArguments</span><span style="color:#B4B4B4"> += </span><span style="color:#569CD6">string</span><span style="color:#B4B4B4">.</span><span style="color:#FF8000">Format</span><span style="color:#DCDCDC">(</span><span style="color:#D69D85">" -arch={0}"</span><span style="color:#DCDCDC">, </span><span style="color:#569CD6">this</span><span style="color:#B4B4B4">.</span><span style="color:#2F9E9C">Arch</span><span style="color:#DCDCDC">);</span></div>
<div class="c ln" style="left:27px;top:197.58px">147</div>
<div class="c" style="left:256.0px;top:197.25px"><span style="color:#DCDCDC">}</span></div>
<div class="c ln" style="left:27px;top:225.58px">148</div>
<div class="c" style="left:256.0px;top:225.25px"><span style="color:#569CD6">if</span><span style="color:#DCDCDC"> (</span><span style="color:#569CD6">this</span><span style="color:#B4B4B4">.</span><span style="color:#2F9E9C">HostArch</span><span style="color:#B4B4B4"> != </span><span style="color:#B8D7A3">DevCmdHostArchValue</span><span style="color:#B4B4B4">.</span><span style="color:#BD63C5">Default</span><span style="color:#DCDCDC">)</span></div>
<div class="c ln" style="left:27px;top:250.08px">149</div>
<div class="c" style="left:256.0px;top:249.75px"><span style="color:#DCDCDC">{</span></div>
<div class="c ln" style="left:27px;top:278.08px">150</div>
<div class="c" style="left:308.0px;top:277.75px"><span style="color:#569CD6">this</span><span style="color:#B4B4B4">.</span><span style="color:#2F9E9C">DevCmdArguments</span><span style="color:#B4B4B4"> += </span><span style="color:#569CD6">string</span><span style="color:#B4B4B4">.</span><span style="color:#FF8000">Format</span><span style="color:#DCDCDC">(</span><span style="color:#D69D85">" -host_arch={0}"</span><span style="color:#DCDCDC">, </span><span style="color:#569CD6">this</span><span style="color:#B4B4B4">.</span><span style="color:#2F9E9C">HostArch</span><span style="color:#DCDCDC">);</span></div>
<div class="c ln" style="left:27px;top:302.58px">151</div>
<div class="c" style="left:256.0px;top:302.25px"><span style="color:#DCDCDC">}</span></div>
<div class="c ln" style="left:27px;top:330.58px">152</div>
<div class="c" style="left:256.0px;top:330.25px"><span style="color:#569CD6">string</span><span style="color:#DCDCDC">[] array</span><span style="color:#B4B4B4"> = </span><span style="color:#569CD6">new</span><span style="color:#DCDCDC"> </span><span style="color:#569CD6">string</span><span style="color:#DCDCDC">[</span><span style="color:#B5CEA8">5</span><span style="color:#DCDCDC">];</span></div>
<div class="c ln" style="left:27px;top:360.33px">153</div>
<div class="c" style="left:256.0px;top:360.00px"><span style="color:#DCDCDC">array[</span><span style="color:#B5CEA8">0</span><span style="color:#DCDCDC">]</span><span style="color:#B4B4B4"> = </span><span style="color:#D69D85">"/c \""</span><span style="color:#DCDCDC">;</span></div>
<div class="c ln" style="left:27px;top:390.08px">154</div>
<div class="c" style="left:256.0px;top:389.75px"><span style="color:#DCDCDC">array[</span><span style="color:#B5CEA8">1</span><span style="color:#DCDCDC">]</span><span style="color:#B4B4B4"> = </span><span style="color:#DCDCDC">text;</span></div>
<div class="c ln" style="left:27px;top:419.83px">155</div>
<div class="c" style="left:256.0px;top:419.50px"><span style="color:#DCDCDC">array[</span><span style="color:#B5CEA8">2</span><span style="color:#DCDCDC">]</span><span style="color:#B4B4B4"> = </span><span style="color:#D69D85">"\" "</span><span style="color:#DCDCDC">;</span></div>
<div class="c ln" style="left:27px;top:449.58px">156</div>
<div class="c" style="left:256.0px;top:449.25px"><span style="color:#569CD6">int</span><span style="color:#DCDCDC"> num</span><span style="color:#B4B4B4"> = </span><span style="color:#B5CEA8">3</span><span style="color:#DCDCDC">;</span></div>
<div class="c ln" style="left:27px;top:479.33px">157</div>
<div class="c" style="left:256.0px;top:479.00px"><span style="color:#569CD6">string</span><span style="color:#DCDCDC"> devCmdArguments</span><span style="color:#B4B4B4"> = </span><span style="color:#569CD6">this</span><span style="color:#B4B4B4">.</span><span style="color:#2F9E9C">DevCmdArguments</span><span style="color:#DCDCDC">;</span></div>
<div class="c ln" style="left:27px;top:509.08px">158</div>
<div class="c" style="left:256.0px;top:508.75px"><span style="color:#DCDCDC">array[num]</span><span style="color:#B4B4B4"> = </span><span style="color:#DCDCDC">((devCmdArguments</span><span style="color:#B4B4B4"> != </span><span style="color:#569CD6">null</span><span style="color:#DCDCDC">)</span><span style="color:#B4B4B4"> ? </span><span style="color:#DCDCDC">devCmdArguments</span><span style="color:#B4B4B4">.</span><span style="color:#FF8000">Trim</span><span style="color:#DCDCDC">()</span><span style="color:#B4B4B4"> : </span><span style="color:#569CD6">null</span><span style="color:#DCDCDC">);</span></div>
<div class="c ln" style="left:27px;top:538.83px">159</div>
<div class="c" style="left:256.0px;top:538.50px"><span style="color:#DCDCDC">array[</span><span style="color:#B5CEA8">4</span><span style="color:#DCDCDC">]</span><span style="color:#B4B4B4"> = </span><span style="color:#D69D85">" &amp;&amp; set"</span><span style="color:#DCDCDC">;</span></div>
<div class="c ln" style="left:27px;top:568.58px">160</div>
<div class="c" style="left:256.0px;top:568.25px"><span style="color:#569CD6">string</span><span style="color:#DCDCDC"> text2</span><span style="color:#B4B4B4"> = </span><span style="color:#569CD6">string</span><span style="color:#B4B4B4">.</span><span style="color:#FF8000">Concat</span><span style="color:#DCDCDC">(array);</span></div>
<div class="c ln" style="left:27px;top:598.33px">161</div>
<div class="c" style="left:256.0px;top:598.00px"><span style="color:#569CD6">base</span><span style="color:#B4B4B4">.</span><span style="color:#FF8000">WriteVerbose</span><span style="color:#DCDCDC">(</span><span style="color:#D69D85">"Using arguments to cmd.exe: "</span><span style="color:#B4B4B4"> + </span><span style="color:#DCDCDC">text2);</span></div>
<div class="c ln" style="left:27px;top:628.08px">162</div>
<div class="c" style="left:256.0px;top:627.75px"><span style="color:#000">ProcessStartInfo</span><span style="color:#000"> processStartInfo = new ProcessStartInfo("cmd.exe", text2)</span></div>
<div class="c ln" style="left:27px;top:652.58px">163</div>
<div class="c" style="left:256.0px;top:652.25px"><span style="color:#000">{</span></div>
<div class="c ln" style="left:27px;top:680.58px">164</div>
<div class="c" style="left:308.0px;top:680.25px"><span style="color:#000">CreateNoWindow = true,</span></div>
<div class="c ln" style="left:27px;top:710.33px">165</div>
<div class="c" style="left:308.0px;top:710.00px"><span style="color:#000">UseShellExecute = false,</span></div>
<div class="c ln" style="left:27px;top:740.08px">166</div>
<div class="c" style="left:308.0px;top:739.75px"><span style="color:#000">RedirectStandardOutput = true</span></div>
<div class="c ln" style="left:27px;top:764.58px">167</div>
<div class="c" style="left:256.0px;top:764.25px"><span style="color:#000">};</span></div>
<div class="c ln" style="left:27px;top:792.58px">168</div>
<div class="c" style="left:256.0px;top:792.25px"><span style="color:#569CD6">if</span><span style="color:#DCDCDC"> (</span><span style="color:#569CD6">this</span><span style="color:#B4B4B4">.</span><span style="color:#2F9E9C">DevCmdDebugLevel</span><span style="color:#B4B4B4"> == </span><span style="color:#B8D7A3">DevCmdDebugLevelValue</span><span style="color:#B4B4B4">.</span><span style="color:#BD63C5">None</span><span style="color:#B4B4B4"> &amp;&amp; </span><span style="color:#DCDCDC">processStartInfo</span><span style="color:#B4B4B4">.</span><span style="color:#2F9E9C">EnvironmentVariables</span><span style="color:#B4B4B4">.</span><span style="color:#FF8000">ContainsKey</span><span style="color:#DCDCDC">(</span><span style="color:#D69D85">"VSCMD_DEBUG"</span><span style="color:#DCDCDC">))</span></div>
<div class="c ln" style="left:27px;top:817.08px">169</div>
<div class="c" style="left:256.0px;top:816.75px"><span style="color:#DCDCDC">{</span></div>
<div class="c ln" style="left:27px;top:845.08px">170</div>
<div class="c" style="left:308.0px;top:844.75px"><span style="color:#DCDCDC">processStartInfo</span><span style="color:#B4B4B4">.</span><span style="color:#2F9E9C">EnvironmentVariables</span><span style="color:#B4B4B4">.</span><span style="color:#FF8000">Remove</span><span style="color:#DCDCDC">(</span><span style="color:#D69D85">"VSCMD_DEBUG"</span><span style="color:#DCDCDC">);</span></div>
<div class="c ln" style="left:27px;top:869.58px">171</div>
<div class="c" style="left:256.0px;top:869.25px"><span style="color:#DCDCDC">}</span></div>
<div class="c ln" style="left:27px;top:897.58px">172</div>
<div class="c" style="left:256.0px;top:897.25px"><span style="color:#569CD6">if</span><span style="color:#DCDCDC"> (</span><span style="color:#569CD6">this</span><span style="color:#B4B4B4">.</span><span style="color:#2F9E9C">DevCmdDebugLevel</span><span style="color:#B4B4B4"> != </span><span style="color:#B8D7A3">DevCmdDebugLevelValue</span><span style="color:#B4B4B4">.</span><span style="color:#BD63C5">None</span><span style="color:#DCDCDC">)</span></div>
<div class="c ln" style="left:27px;top:922.08px">173</div>
<div class="c" style="left:256.0px;top:921.75px"><span style="color:#DCDCDC">{</span></div>
<div class="c ln" style="left:27px;top:950.08px">174</div>
<div class="c" style="left:308.0px;top:949.75px"><span style="color:#DCDCDC">processStartInfo</span><span style="color:#B4B4B4">.</span><span style="color:#2F9E9C">EnvironmentVariables</span><span style="color:#DCDCDC">[</span><span style="color:#D69D85">"VSCMD_DEBUG"</span><span style="color:#DCDCDC">]</span><span style="color:#B4B4B4"> = </span><span style="color:#DCDCDC">((</span><span style="color:#569CD6">int</span><span style="color:#DCDCDC">)</span><span style="color:#569CD6">this</span><span style="color:#B4B4B4">.</span><span style="color:#2F9E9C">DevCmdDebugLevel</span><span style="color:#DCDCDC">)</span><span style="color:#B4B4B4">.</span><span style="color:#FF8000">ToString</span><span style="color:#DCDCDC">();</span></div>
<div class="c ln" style="left:27px;top:974.58px">175</div>
<div class="c" style="left:256.0px;top:974.25px"><span style="color:#DCDCDC">}</span></div>
<div class="c ln" style="left:27px;top:1002.58px">176</div>
<div class="c" style="left:256.0px;top:1002.25px"><span style="color:#DCDCDC">processStartInfo</span><span style="color:#B4B4B4">.</span><span style="color:#2F9E9C">EnvironmentVariables</span><span style="color:#DCDCDC">[</span><span style="color:#D69D85">"VSCMD_SKIP_SENDTELEMETRY"</span><span style="color:#DCDCDC">]</span><span style="color:#B4B4B4"> = </span><span style="color:#D69D85">"1"</span><span style="color:#DCDCDC">;</span></div>
<div class="c ln" style="left:27px;top:1032.33px">177</div>
<div class="c" style="left:256.0px;top:1032.00px"><span style="color:#DCDCDC">processStartInfo</span><span style="color:#B4B4B4">.</span><span style="color:#2F9E9C">EnvironmentVariables</span><span style="color:#DCDCDC">[</span><span style="color:#D69D85">"VSCMD_BANNER_SHELL_NAME_ALT"</span><span style="color:#DCDCDC">]</span><span style="color:#B4B4B4"> = </span><span style="color:#D69D85">"Developer PowerShell"</span><span style="color:#DCDCDC">;</span></div>
<div class="c ln" style="left:27px;top:1062.08px">178</div>
<div class="c" style="left:256.0px;top:1061.75px"><span style="color:#569CD6">base</span><span style="color:#B4B4B4">.</span><span style="color:#FF8000">WriteVerbose</span><span style="color:#DCDCDC">(</span><span style="color:#D69D85">"Starting the cmd.exe process..."</span><span style="color:#DCDCDC">);</span></div>
<div class="c ln" style="left:27px;top:1091.83px">179</div>
<div class="c" style="left:256.0px;top:1091.50px"><span style="color:#569CD6">using</span><span style="color:#DCDCDC"> (</span><span style="color:#4EC9B0">Process</span><span style="color:#DCDCDC"> process</span><span style="color:#B4B4B4"> = </span><span style="color:#4EC9B0">Process</span><span style="color:#B4B4B4">.</span><span style="color:#FF8000">Start</span><span style="color:#DCDCDC">(processStartInfo))</span></div>
<div class="c ln" style="left:27px;top:1116.33px">180</div>
<div class="c" style="left:256.0px;top:1116.00px"><span style="color:#DCDCDC">{</span></div>
<div class="c ln" style="left:27px;top:1144.33px">181</div>
<div class="c" style="left:308.0px;top:1144.00px"><span style="color:#4EC9B0">StringBuilder</span><span style="color:#DCDCDC"> stringBuilder</span><span style="color:#B4B4B4"> = </span><span style="color:#569CD6">null</span><span style="color:#DCDCDC">;</span></div>
<div class="c ln" style="left:27px;top:1174.08px">182</div>
<div class="c" style="left:308.0px;top:1173.75px"><span style="color:#569CD6">string</span><span style="color:#DCDCDC"> text3;</span></div>
<div class="c ln" style="left:27px;top:1203.83px">183</div>
<div class="c" style="left:308.0px;top:1203.50px"><span style="color:#569CD6">while</span><span style="color:#DCDCDC"> ((text3</span><span style="color:#B4B4B4"> = </span><span style="color:#DCDCDC">process</span><span style="color:#B4B4B4">.</span><span style="color:#2F9E9C">StandardOutput</span><span style="color:#B4B4B4">.</span><span style="color:#FF8000">ReadLine</span><span style="color:#DCDCDC">())</span><span style="color:#B4B4B4"> != </span><span style="color:#569CD6">null</span><span style="color:#DCDCDC">)</span></div>
<div class="c ln" style="left:27px;top:1228.33px">184</div>
<div class="c" style="left:308.0px;top:1228.00px"><span style="color:#DCDCDC">{</span></div>
<div class="c ln" style="left:27px;top:1256.33px">185</div>
<div class="c" style="left:360.0px;top:1256.00px"><span style="color:#569CD6">if</span><span style="color:#DCDCDC"> (</span><span style="color:#4EC9B0">EnterVsDevShellCommand</span><span style="color:#B4B4B4">.</span><span style="color:#8D8FC6">ErrorOutputRegex</span><span style="color:#B4B4B4">.</span><span style="color:#FF8000">IsMatch</span><span style="color:#DCDCDC">(text3))</span></div>
</div>
<svg style="left:898.0px;top:779.9px" width="28" height="28" viewBox="0 0 28 28"><circle cx="13" cy="14" r="11.6" fill="#D9525E" stroke="#F26B76" stroke-width="1.4"/><path d="M2.2 8.6 H13 V3.6 L23 14 L13 24.6 V19.4 H2.2 Z" fill="#D69A00" stroke="#EDEDED" stroke-width="1.5" stroke-linejoin="miter"/></svg>
<div class="r" style="left:896.0px;top:1478.0px;width:2930.0px;height:628.0px;background:#3F3F46;"></div>
<div class="r" style="left:898.0px;top:1480.0px;width:2926.0px;height:40.0px;background:#007ACC;"></div>
<div class="u" style="left:905.8px;top:1486.8px;height:29px;line-height:29px;font-size:20.5px;color:#FFFFFF;letter-spacing:-0.561px;">Locals</div>
<svg style="left:981px;top:1495px" width="2773" height="10" viewBox="0 0 2773 10"><defs><pattern id="g981_1495" width="7" height="7" patternUnits="userSpaceOnUse"><rect x="0" y="0" width="1.8" height="1.8" fill="#59A8DE"/><rect x="3.5" y="3.5" width="1.8" height="1.8" fill="#59A8DE"/></pattern></defs><rect x="0" y="0" width="2773" height="9" fill="url(#g981_1495)"/></svg>
<svg style="left:3768px;top:1496px" width="14" height="8" viewBox="0 0 14 8"><path d="M0 0 H14 L7 7 Z" fill="#FFFFFF"/></svg>
<svg style="left:3796px;top:1490px" width="18" height="18" viewBox="0 0 18 18"><path d="M1.5 1.5 L16.5 16 M16.5 1.5 L1.5 16" stroke="#FFFFFF" stroke-width="2.6" fill="none"/></svg>
<div class="r" style="left:898.0px;top:1520.0px;width:2895.0px;height:545.0px;background:#252526;"></div>
<div class="r" style="left:898.0px;top:1520.0px;width:2895.0px;height:2.0px;background:#3F3F46;"></div>
<div class="r" style="left:3793.0px;top:1520.0px;width:31.0px;height:545.0px;background:#3E3E42;"></div>
<svg style="left:3800px;top:1531px" width="16" height="10" viewBox="0 0 16 10"><path d="M0 9.5 L8 0.5 L16 9.5 Z" fill="#999999"/></svg>
<div class="r" style="left:3801.0px;top:1550.0px;width:16.0px;height:291.0px;background:#686868;"></div>
<svg style="left:3800px;top:2046px" width="16" height="10" viewBox="0 0 16 10"><path d="M0 0.5 L8 9.5 L16 0.5 Z" fill="#999999"/></svg>
<div class="r" style="left:902.0px;top:1554.0px;width:2888.0px;height:2.0px;background:#3F3F46;"></div>
<div class="r" style="left:1601.0px;top:1522.0px;width:2.0px;height:32.0px;background:#3F3F46;"></div>
<div class="r" style="left:2787.0px;top:1522.0px;width:2.0px;height:32.0px;background:#3F3F46;"></div>
<div class="r" style="left:3137.0px;top:1522.0px;width:2.0px;height:32.0px;background:#3F3F46;"></div>
<div class="u" style="left:912.8px;top:1523.4px;height:29px;line-height:29px;font-size:20.5px;color:#F1F1F1;letter-spacing:0.012px;">Name</div>
<div class="u" style="left:1612.0px;top:1523.4px;height:29px;line-height:29px;font-size:20.5px;color:#F1F1F1;letter-spacing:-0.283px;">Value</div>
<div class="u" style="left:2798.5px;top:1523.4px;height:29px;line-height:29px;font-size:20.5px;color:#F1F1F1;letter-spacing:-0.639px;">Type</div>
<div class="r" style="left:898.0px;top:1586.0px;width:2239.0px;height:2.0px;background:#000000;"></div>
<div class="r" style="left:1599.0px;top:1556.0px;width:2.0px;height:30.0px;background:#000000;"></div>
<div class="r" style="left:2785.0px;top:1556.0px;width:2.0px;height:30.0px;background:#000000;"></div>
<div class="r" style="left:3135.0px;top:1556.0px;width:2.0px;height:30.0px;background:#000000;"></div>
<svg style="left:914px;top:1561.5px" width="12" height="19" viewBox="0 0 12 19"><path d="M1.2 2 L8.9 9.5 L1.2 17 Z" fill="none" stroke="#F1F1F1" stroke-width="2"/></svg>
<svg style="left:932.0px;top:1557.0px" width="28" height="28" viewBox="0 0 16 16"><path d="M1.4 6.4 L10.4 0.9 L14.8 4.9 V9.2 L5.65 14.55 L1.4 10.5 Z" fill="#232E3D" stroke="#4DA6F5" stroke-width="1" stroke-linejoin="round"/><path d="M1.4 6.4 L10.4 0.9 L14.8 4.9 L5.65 10.3 Z" fill="#2E3D50" stroke="#4DA6F5" stroke-width="1" stroke-linejoin="round"/><path d="M5.65 10.3 V14.55" stroke="#4DA6F5" stroke-width="1"/></svg>
<div class="u" style="left:969.7px;top:1558.0px;height:29px;line-height:29px;font-size:20.5px;color:#569CD6;letter-spacing:0.032px;">this</div>
<div class="u" style="left:1608.6px;top:1558.0px;height:29px;line-height:29px;font-size:20.5px;letter-spacing:-0.099px;"><span style="color:#4EC9E8">Command</span><span style="color:#4EC9E8"> = </span><span style="color:#4EC9E8">{Enter-VsDevShell}</span></div>
<div class="u" style="left:2790.4px;top:1558.0px;height:29px;line-height:29px;font-size:20.5px;letter-spacing:-0.117px;"><span style="color:#FFD700">Microsoft.VisualStudio.DevShell.C...</span></div>
<div class="r" style="left:898.0px;top:1618.0px;width:2239.0px;height:2.0px;background:#000000;"></div>
<div class="r" style="left:1599.0px;top:1588.0px;width:2.0px;height:30.0px;background:#000000;"></div>
<div class="r" style="left:2785.0px;top:1588.0px;width:2.0px;height:30.0px;background:#000000;"></div>
<div class="r" style="left:3135.0px;top:1588.0px;width:2.0px;height:30.0px;background:#000000;"></div>
<svg style="left:914px;top:1593.5px" width="12" height="19" viewBox="0 0 12 19"><path d="M1.2 2 L8.9 9.5 L1.2 17 Z" fill="none" stroke="#F1F1F1" stroke-width="2"/></svg>
<svg style="left:932.0px;top:1589.0px" width="28" height="28" viewBox="0 0 16 16"><path d="M1.4 6.4 L10.4 0.9 L14.8 4.9 V9.2 L5.65 14.55 L1.4 10.5 Z" fill="#232E3D" stroke="#4DA6F5" stroke-width="1" stroke-linejoin="round"/><path d="M1.4 6.4 L10.4 0.9 L14.8 4.9 L5.65 10.3 Z" fill="#2E3D50" stroke="#4DA6F5" stroke-width="1" stroke-linejoin="round"/><path d="M5.65 10.3 V14.55" stroke="#4DA6F5" stroke-width="1"/></svg>
<div class="u" style="left:969.7px;top:1590.0px;height:29px;line-height:29px;font-size:20.5px;color:#DCDCDC;letter-spacing:-0.084px;">task</div>
<div class="u" style="left:1608.6px;top:1590.0px;height:29px;line-height:29px;font-size:20.5px;letter-spacing:0.147px;"><span style="color:#4EC9E8">Id</span><span style="color:#4EC9E8"> = </span><span style="color:#B5CEA8">0x00000001</span><span style="color:#4EC9E8">, </span><span style="color:#4EC9E8">Status</span><span style="color:#4EC9E8"> = </span><span style="color:#BD63C5">RanToCompletion</span><span style="color:#4EC9E8">, </span><span style="color:#4EC9E8">Method</span><span style="color:#4EC9E8"> = </span><span style="color:#D69D85">"{null}"</span></div>
<div class="u" style="left:2790.4px;top:1590.0px;height:29px;line-height:29px;font-size:20.5px;letter-spacing:-0.473px;"><span style="color:#FFD700">System.Threading.Tasks.</span><span style="color:#4EC9B0">Task</span></div>
<div class="r" style="left:898.0px;top:1650.0px;width:2239.0px;height:2.0px;background:#000000;"></div>
<div class="r" style="left:1599.0px;top:1620.0px;width:2.0px;height:30.0px;background:#000000;"></div>
<div class="r" style="left:2785.0px;top:1620.0px;width:2.0px;height:30.0px;background:#000000;"></div>
<div class="r" style="left:3135.0px;top:1620.0px;width:2.0px;height:30.0px;background:#000000;"></div>
<svg style="left:914px;top:1625.5px" width="12" height="19" viewBox="0 0 12 19"><path d="M1.2 2 L8.9 9.5 L1.2 17 Z" fill="none" stroke="#F1F1F1" stroke-width="2"/></svg>
<svg style="left:932.0px;top:1621.0px" width="28" height="28" viewBox="0 0 16 16"><path d="M1.4 6.4 L10.4 0.9 L14.8 4.9 V9.2 L5.65 14.55 L1.4 10.5 Z" fill="#232E3D" stroke="#4DA6F5" stroke-width="1" stroke-linejoin="round"/><path d="M1.4 6.4 L10.4 0.9 L14.8 4.9 L5.65 10.3 Z" fill="#2E3D50" stroke="#4DA6F5" stroke-width="1" stroke-linejoin="round"/><path d="M5.65 10.3 V14.55" stroke="#4DA6F5" stroke-width="1"/></svg>
<div class="u" style="left:969.7px;top:1622.0px;height:29px;line-height:29px;font-size:20.5px;color:#DCDCDC;letter-spacing:0.081px;">setupInstance</div>
<div class="u" style="left:1608.6px;top:1622.0px;height:29px;line-height:29px;font-size:20.5px;letter-spacing:-0.462px;"><span style="color:#E51400">{</span><span style="color:#FFD700">System.</span><span style="color:#4EC9B0">__ComObject</span><span style="color:#E51400">}</span></div>
<div class="u" style="left:2790.4px;top:1622.0px;height:29px;line-height:29px;font-size:20.5px;letter-spacing:-0.003px;"><span style="color:#FFD700">Microsoft.VisualStudio.Setup.Confi...</span></div>
<div class="r" style="left:898.0px;top:1682.0px;width:2239.0px;height:2.0px;background:#000000;"></div>
<div class="r" style="left:1599.0px;top:1652.0px;width:2.0px;height:30.0px;background:#000000;"></div>
<div class="r" style="left:2785.0px;top:1652.0px;width:2.0px;height:30.0px;background:#000000;"></div>
<div class="r" style="left:3135.0px;top:1652.0px;width:2.0px;height:30.0px;background:#000000;"></div>
<svg style="left:932.0px;top:1653.0px" width="28" height="28" viewBox="0 0 16 16"><path d="M1.4 6.4 L10.4 0.9 L14.8 4.9 V9.2 L5.65 14.55 L1.4 10.5 Z" fill="#232E3D" stroke="#4DA6F5" stroke-width="1" stroke-linejoin="round"/><path d="M1.4 6.4 L10.4 0.9 L14.8 4.9 L5.65 10.3 Z" fill="#2E3D50" stroke="#4DA6F5" stroke-width="1" stroke-linejoin="round"/><path d="M5.65 10.3 V14.55" stroke="#4DA6F5" stroke-width="1"/></svg>
<div class="u" style="left:969.7px;top:1654.0px;height:29px;line-height:29px;font-size:20.5px;color:#DCDCDC;letter-spacing:0.329px;">text</div>
<div class="u" style="left:1608.6px;top:1654.0px;height:29px;line-height:29px;font-size:20.5px;letter-spacing:0.114px;"><span style="color:#D69D85">@"C:\Program Files\Microsoft Visual Studio\2022\Enterprise\Common7\Tools\VsDevCmd.bat"</span></div>
<div class="u" style="left:2790.4px;top:1654.0px;height:29px;line-height:29px;font-size:20.5px;letter-spacing:0.081px;"><span style="color:#569CD6">string</span></div>
<div class="r" style="left:898.0px;top:1684.0px;width:2895.0px;height:30.0px;background:#404040;"></div>
<div class="r" style="left:898.0px;top:1714.0px;width:2239.0px;height:2.0px;background:#000000;"></div>
<div class="r" style="left:1599.0px;top:1684.0px;width:2.0px;height:30.0px;background:#000000;"></div>
<div class="r" style="left:2785.0px;top:1684.0px;width:2.0px;height:30.0px;background:#000000;"></div>
<div class="r" style="left:3135.0px;top:1684.0px;width:2.0px;height:30.0px;background:#000000;"></div>
<svg style="left:932.0px;top:1685.0px" width="28" height="28" viewBox="0 0 16 16"><path d="M1.4 6.4 L10.4 0.9 L14.8 4.9 V9.2 L5.65 14.55 L1.4 10.5 Z" fill="#232E3D" stroke="#4DA6F5" stroke-width="1" stroke-linejoin="round"/><path d="M1.4 6.4 L10.4 0.9 L14.8 4.9 L5.65 10.3 Z" fill="#2E3D50" stroke="#4DA6F5" stroke-width="1" stroke-linejoin="round"/><path d="M5.65 10.3 V14.55" stroke="#4DA6F5" stroke-width="1"/></svg>
<div class="u" style="left:969.7px;top:1686.0px;height:29px;line-height:29px;font-size:20.5px;color:#DCDCDC;letter-spacing:0.195px;">text2</div>
<div class="u" style="left:1608.6px;top:1686.0px;height:29px;line-height:29px;font-size:20.5px;letter-spacing:0.227px;"><span style="color:#D69D85">@"/c ""C:\Program Files\Microsoft Visual Studio\2022\Enterprise\Common7\Tools\VsDevCmd.bat"" -arch=amd64 &amp;&amp; set"</span></div>
<div class="u" style="left:2790.4px;top:1686.0px;height:29px;line-height:29px;font-size:20.5px;letter-spacing:0.081px;"><span style="color:#569CD6">string</span></div>
<div class="r" style="left:898.0px;top:1746.0px;width:2239.0px;height:2.0px;background:#000000;"></div>
<div class="r" style="left:1599.0px;top:1716.0px;width:2.0px;height:30.0px;background:#000000;"></div>
<div class="r" style="left:2785.0px;top:1716.0px;width:2.0px;height:30.0px;background:#000000;"></div>
<div class="r" style="left:3135.0px;top:1716.0px;width:2.0px;height:30.0px;background:#000000;"></div>
<svg style="left:932.0px;top:1717.0px" width="28" height="28" viewBox="0 0 16 16"><path d="M1.4 6.4 L10.4 0.9 L14.8 4.9 V9.2 L5.65 14.55 L1.4 10.5 Z" fill="#232E3D" stroke="#4DA6F5" stroke-width="1" stroke-linejoin="round"/><path d="M1.4 6.4 L10.4 0.9 L14.8 4.9 L5.65 10.3 Z" fill="#2E3D50" stroke="#4DA6F5" stroke-width="1" stroke-linejoin="round"/><path d="M5.65 10.3 V14.55" stroke="#4DA6F5" stroke-width="1"/></svg>
<div class="u" style="left:969.7px;top:1718.0px;height:29px;line-height:29px;font-size:20.5px;color:#DCDCDC;letter-spacing:-0.047px;">processStartInfo</div>
<div class="u" style="left:1608.6px;top:1718.0px;height:29px;line-height:29px;font-size:20.5px;letter-spacing:0.17px;"><span style="color:#569CD6">null</span></div>
<div class="u" style="left:2790.4px;top:1718.0px;height:29px;line-height:29px;font-size:20.5px;letter-spacing:-0.209px;"><span style="color:#FFD700">System.Diagnostics.</span><span style="color:#4EC9B0">ProcessStartInfo</span></div>
<div class="r" style="left:898.0px;top:1778.0px;width:2239.0px;height:2.0px;background:#000000;"></div>
<div class="r" style="left:1599.0px;top:1748.0px;width:2.0px;height:30.0px;background:#000000;"></div>
<div class="r" style="left:2785.0px;top:1748.0px;width:2.0px;height:30.0px;background:#000000;"></div>
<div class="r" style="left:3135.0px;top:1748.0px;width:2.0px;height:30.0px;background:#000000;"></div>
<svg style="left:914px;top:1753.5px" width="12" height="19" viewBox="0 0 12 19"><path d="M1.2 2 L8.9 9.5 L1.2 17 Z" fill="none" stroke="#F1F1F1" stroke-width="2"/></svg>
<svg style="left:932.0px;top:1749.0px" width="28" height="28" viewBox="0 0 16 16"><path d="M1.4 6.4 L10.4 0.9 L14.8 4.9 V9.2 L5.65 14.55 L1.4 10.5 Z" fill="#232E3D" stroke="#4DA6F5" stroke-width="1" stroke-linejoin="round"/><path d="M1.4 6.4 L10.4 0.9 L14.8 4.9 L5.65 10.3 Z" fill="#2E3D50" stroke="#4DA6F5" stroke-width="1" stroke-linejoin="round"/><path d="M5.65 10.3 V14.55" stroke="#4DA6F5" stroke-width="1"/></svg>
<div class="u" style="left:969.7px;top:1750.0px;height:29px;line-height:29px;font-size:20.5px;color:#DCDCDC;letter-spacing:-0.196px;">currentProcess</div>
<div class="u" style="left:1608.6px;top:1750.0px;height:29px;line-height:29px;font-size:20.5px;letter-spacing:0.17px;"><span style="color:#569CD6">null</span></div>
<div class="u" style="left:2790.4px;top:1750.0px;height:29px;line-height:29px;font-size:20.5px;letter-spacing:-0.345px;"><span style="color:#FFD700">System.Diagnostics.</span><span style="color:#4EC9B0">Process</span></div>
<div class="r" style="left:898.0px;top:1810.0px;width:2239.0px;height:2.0px;background:#000000;"></div>
<div class="r" style="left:1599.0px;top:1780.0px;width:2.0px;height:30.0px;background:#000000;"></div>
<div class="r" style="left:2785.0px;top:1780.0px;width:2.0px;height:30.0px;background:#000000;"></div>
<div class="r" style="left:3135.0px;top:1780.0px;width:2.0px;height:30.0px;background:#000000;"></div>
<svg style="left:932.0px;top:1781.0px" width="28" height="28" viewBox="0 0 16 16"><path d="M1.4 6.4 L10.4 0.9 L14.8 4.9 V9.2 L5.65 14.55 L1.4 10.5 Z" fill="#232E3D" stroke="#4DA6F5" stroke-width="1" stroke-linejoin="round"/><path d="M1.4 6.4 L10.4 0.9 L14.8 4.9 L5.65 10.3 Z" fill="#2E3D50" stroke="#4DA6F5" stroke-width="1" stroke-linejoin="round"/><path d="M5.65 10.3 V14.55" stroke="#4DA6F5" stroke-width="1"/></svg>
<div class="u" style="left:969.7px;top:1782.0px;height:29px;line-height:29px;font-size:20.5px;color:#DCDCDC;letter-spacing:0.031px;">parameterSetName</div>
<div class="u" style="left:1608.6px;top:1782.0px;height:29px;line-height:29px;font-size:20.5px;letter-spacing:-0.062px;"><span style="color:#D69D85">"InstanceIdParameterSet"</span></div>
<div class="u" style="left:2790.4px;top:1782.0px;height:29px;line-height:29px;font-size:20.5px;letter-spacing:0.081px;"><span style="color:#569CD6">string</span></div>
<div class="r" style="left:898.0px;top:1842.0px;width:2239.0px;height:2.0px;background:#000000;"></div>
<div class="r" style="left:1599.0px;top:1812.0px;width:2.0px;height:30.0px;background:#000000;"></div>
<div class="r" style="left:2785.0px;top:1812.0px;width:2.0px;height:30.0px;background:#000000;"></div>
<div class="r" style="left:3135.0px;top:1812.0px;width:2.0px;height:30.0px;background:#000000;"></div>
<svg style="left:914px;top:1817.5px" width="12" height="19" viewBox="0 0 12 19"><path d="M1.2 2 L8.9 9.5 L1.2 17 Z" fill="none" stroke="#F1F1F1" stroke-width="2"/></svg>
<svg style="left:932.0px;top:1813.0px" width="28" height="28" viewBox="0 0 16 16"><path d="M1.4 6.4 L10.4 0.9 L14.8 4.9 V9.2 L5.65 14.55 L1.4 10.5 Z" fill="#232E3D" stroke="#4DA6F5" stroke-width="1" stroke-linejoin="round"/><path d="M1.4 6.4 L10.4 0.9 L14.8 4.9 L5.65 10.3 Z" fill="#2E3D50" stroke="#4DA6F5" stroke-width="1" stroke-linejoin="round"/><path d="M5.65 10.3 V14.55" stroke="#4DA6F5" stroke-width="1"/></svg>
<div class="u" style="left:969.7px;top:1814.0px;height:29px;line-height:29px;font-size:20.5px;color:#DCDCDC;letter-spacing:-0.353px;">process</div>
<div class="u" style="left:1608.6px;top:1814.0px;height:29px;line-height:29px;font-size:20.5px;letter-spacing:0.17px;"><span style="color:#569CD6">null</span></div>
<div class="u" style="left:2790.4px;top:1814.0px;height:29px;line-height:29px;font-size:20.5px;letter-spacing:-0.345px;"><span style="color:#FFD700">System.Diagnostics.</span><span style="color:#4EC9B0">Process</span></div>
<div class="r" style="left:898.0px;top:1874.0px;width:2239.0px;height:2.0px;background:#000000;"></div>
<div class="r" style="left:1599.0px;top:1844.0px;width:2.0px;height:30.0px;background:#000000;"></div>
<div class="r" style="left:2785.0px;top:1844.0px;width:2.0px;height:30.0px;background:#000000;"></div>
<div class="r" style="left:3135.0px;top:1844.0px;width:2.0px;height:30.0px;background:#000000;"></div>
<svg style="left:932.0px;top:1845.0px" width="28" height="28" viewBox="0 0 16 16"><path d="M1.4 6.4 L10.4 0.9 L14.8 4.9 V9.2 L5.65 14.55 L1.4 10.5 Z" fill="#232E3D" stroke="#4DA6F5" stroke-width="1" stroke-linejoin="round"/><path d="M1.4 6.4 L10.4 0.9 L14.8 4.9 L5.65 10.3 Z" fill="#2E3D50" stroke="#4DA6F5" stroke-width="1" stroke-linejoin="round"/><path d="M5.65 10.3 V14.55" stroke="#4DA6F5" stroke-width="1"/></svg>
<div class="u" style="left:969.7px;top:1846.0px;height:29px;line-height:29px;font-size:20.5px;color:#DCDCDC;letter-spacing:0.195px;">text3</div>
<div class="u" style="left:1608.6px;top:1846.0px;height:29px;line-height:29px;font-size:20.5px;letter-spacing:0.17px;"><span style="color:#569CD6">null</span></div>
<div class="u" style="left:2790.4px;top:1846.0px;height:29px;line-height:29px;font-size:20.5px;letter-spacing:0.081px;"><span style="color:#569CD6">string</span></div>
<div class="r" style="left:898.0px;top:1906.0px;width:2239.0px;height:2.0px;background:#000000;"></div>
<div class="r" style="left:1599.0px;top:1876.0px;width:2.0px;height:30.0px;background:#000000;"></div>
<div class="r" style="left:2785.0px;top:1876.0px;width:2.0px;height:30.0px;background:#000000;"></div>
<div class="r" style="left:3135.0px;top:1876.0px;width:2.0px;height:30.0px;background:#000000;"></div>
<svg style="left:932.0px;top:1877.0px" width="28" height="28" viewBox="0 0 16 16"><path d="M1.4 6.4 L10.4 0.9 L14.8 4.9 V9.2 L5.65 14.55 L1.4 10.5 Z" fill="#232E3D" stroke="#4DA6F5" stroke-width="1" stroke-linejoin="round"/><path d="M1.4 6.4 L10.4 0.9 L14.8 4.9 L5.65 10.3 Z" fill="#2E3D50" stroke="#4DA6F5" stroke-width="1" stroke-linejoin="round"/><path d="M5.65 10.3 V14.55" stroke="#4DA6F5" stroke-width="1"/></svg>
<div class="u" style="left:969.7px;top:1878.0px;height:29px;line-height:29px;font-size:20.5px;color:#DCDCDC;letter-spacing:0.15px;">stringBuilder</div>
<div class="u" style="left:1608.6px;top:1878.0px;height:29px;line-height:29px;font-size:20.5px;letter-spacing:0.17px;"><span style="color:#569CD6">null</span></div>
<div class="u" style="left:2790.4px;top:1878.0px;height:29px;line-height:29px;font-size:20.5px;letter-spacing:-0.264px;"><span style="color:#FFD700">System.Text.</span><span style="color:#4EC9B0">StringBuilder</span></div>
<div class="r" style="left:898.0px;top:1938.0px;width:2239.0px;height:2.0px;background:#000000;"></div>
<div class="r" style="left:1599.0px;top:1908.0px;width:2.0px;height:30.0px;background:#000000;"></div>
<div class="r" style="left:2785.0px;top:1908.0px;width:2.0px;height:30.0px;background:#000000;"></div>
<div class="r" style="left:3135.0px;top:1908.0px;width:2.0px;height:30.0px;background:#000000;"></div>
<svg style="left:932.0px;top:1909.0px" width="28" height="28" viewBox="0 0 16 16"><path d="M1.4 6.4 L10.4 0.9 L14.8 4.9 V9.2 L5.65 14.55 L1.4 10.5 Z" fill="#232E3D" stroke="#4DA6F5" stroke-width="1" stroke-linejoin="round"/><path d="M1.4 6.4 L10.4 0.9 L14.8 4.9 L5.65 10.3 Z" fill="#2E3D50" stroke="#4DA6F5" stroke-width="1" stroke-linejoin="round"/><path d="M5.65 10.3 V14.55" stroke="#4DA6F5" stroke-width="1"/></svg>
<div class="u" style="left:969.7px;top:1910.0px;height:29px;line-height:29px;font-size:20.5px;color:#DCDCDC;letter-spacing:0.195px;">text5</div>
<div class="u" style="left:1608.6px;top:1910.0px;height:29px;line-height:29px;font-size:20.5px;letter-spacing:0.17px;"><span style="color:#569CD6">null</span></div>
<div class="u" style="left:2790.4px;top:1910.0px;height:29px;line-height:29px;font-size:20.5px;letter-spacing:0.081px;"><span style="color:#569CD6">string</span></div>
<div class="r" style="left:898.0px;top:1970.0px;width:2239.0px;height:2.0px;background:#000000;"></div>
<div class="r" style="left:1599.0px;top:1940.0px;width:2.0px;height:30.0px;background:#000000;"></div>
<div class="r" style="left:2785.0px;top:1940.0px;width:2.0px;height:30.0px;background:#000000;"></div>
<div class="r" style="left:3135.0px;top:1940.0px;width:2.0px;height:30.0px;background:#000000;"></div>
<svg style="left:932.0px;top:1941.0px" width="28" height="28" viewBox="0 0 16 16"><path d="M1.4 6.4 L10.4 0.9 L14.8 4.9 V9.2 L5.65 14.55 L1.4 10.5 Z" fill="#232E3D" stroke="#4DA6F5" stroke-width="1" stroke-linejoin="round"/><path d="M1.4 6.4 L10.4 0.9 L14.8 4.9 L5.65 10.3 Z" fill="#2E3D50" stroke="#4DA6F5" stroke-width="1" stroke-linejoin="round"/><path d="M5.65 10.3 V14.55" stroke="#4DA6F5" stroke-width="1"/></svg>
<div class="u" style="left:969.7px;top:1942.0px;height:29px;line-height:29px;font-size:20.5px;color:#DCDCDC;letter-spacing:0.195px;">text6</div>
<div class="u" style="left:1608.6px;top:1942.0px;height:29px;line-height:29px;font-size:20.5px;letter-spacing:0.17px;"><span style="color:#569CD6">null</span></div>
<div class="u" style="left:2790.4px;top:1942.0px;height:29px;line-height:29px;font-size:20.5px;letter-spacing:0.081px;"><span style="color:#569CD6">string</span></div>
<div class="r" style="left:898.0px;top:2002.0px;width:2239.0px;height:2.0px;background:#000000;"></div>
<div class="r" style="left:1599.0px;top:1972.0px;width:2.0px;height:30.0px;background:#000000;"></div>
<div class="r" style="left:2785.0px;top:1972.0px;width:2.0px;height:30.0px;background:#000000;"></div>
<div class="r" style="left:3135.0px;top:1972.0px;width:2.0px;height:30.0px;background:#000000;"></div>
<svg style="left:914px;top:1977.5px" width="12" height="19" viewBox="0 0 12 19"><path d="M1.2 2 L8.9 9.5 L1.2 17 Z" fill="none" stroke="#F1F1F1" stroke-width="2"/></svg>
<svg style="left:932.0px;top:1973.0px" width="28" height="28" viewBox="0 0 16 16"><path d="M1.4 6.4 L10.4 0.9 L14.8 4.9 V9.2 L5.65 14.55 L1.4 10.5 Z" fill="#232E3D" stroke="#4DA6F5" stroke-width="1" stroke-linejoin="round"/><path d="M1.4 6.4 L10.4 0.9 L14.8 4.9 L5.65 10.3 Z" fill="#2E3D50" stroke="#4DA6F5" stroke-width="1" stroke-linejoin="round"/><path d="M5.65 10.3 V14.55" stroke="#4DA6F5" stroke-width="1"/></svg>
<div class="u" style="left:969.7px;top:1974.0px;height:29px;line-height:29px;font-size:20.5px;color:#DCDCDC;letter-spacing:0.25px;">match</div>
<div class="u" style="left:1608.6px;top:1974.0px;height:29px;line-height:29px;font-size:20.5px;letter-spacing:0.17px;"><span style="color:#569CD6">null</span></div>
<div class="u" style="left:2790.4px;top:1974.0px;height:29px;line-height:29px;font-size:20.5px;letter-spacing:-0.389px;"><span style="color:#FFD700">System.Text.RegularExpressions.</span><span style="color:#4EC9B0">M...</span></div>
<div class="r" style="left:898.0px;top:2034.0px;width:2239.0px;height:2.0px;background:#000000;"></div>
<div class="r" style="left:1599.0px;top:2004.0px;width:2.0px;height:30.0px;background:#000000;"></div>
<div class="r" style="left:2785.0px;top:2004.0px;width:2.0px;height:30.0px;background:#000000;"></div>
<div class="r" style="left:3135.0px;top:2004.0px;width:2.0px;height:30.0px;background:#000000;"></div>
<svg style="left:932.0px;top:2005.0px" width="28" height="28" viewBox="0 0 16 16"><path d="M1.4 6.4 L10.4 0.9 L14.8 4.9 V9.2 L5.65 14.55 L1.4 10.5 Z" fill="#232E3D" stroke="#4DA6F5" stroke-width="1" stroke-linejoin="round"/><path d="M1.4 6.4 L10.4 0.9 L14.8 4.9 L5.65 10.3 Z" fill="#2E3D50" stroke="#4DA6F5" stroke-width="1" stroke-linejoin="round"/><path d="M5.65 10.3 V14.55" stroke="#4DA6F5" stroke-width="1"/></svg>
<div class="u" style="left:969.7px;top:2006.0px;height:29px;line-height:29px;font-size:20.5px;color:#DCDCDC;letter-spacing:-0.135px;">value</div>
<div class="u" style="left:1608.6px;top:2006.0px;height:29px;line-height:29px;font-size:20.5px;letter-spacing:0.17px;"><span style="color:#569CD6">null</span></div>
<div class="u" style="left:2790.4px;top:2006.0px;height:29px;line-height:29px;font-size:20.5px;letter-spacing:0.081px;"><span style="color:#569CD6">string</span></div>
<div class="r" style="left:1599.0px;top:2036.0px;width:2.0px;height:30.0px;background:#000000;"></div>
<div class="r" style="left:2785.0px;top:2036.0px;width:2.0px;height:30.0px;background:#000000;"></div>
<div class="r" style="left:3135.0px;top:2036.0px;width:2.0px;height:30.0px;background:#000000;"></div>
<svg style="left:932.0px;top:2037.0px" width="28" height="28" viewBox="0 0 16 16"><path d="M1.4 6.4 L10.4 0.9 L14.8 4.9 V9.2 L5.65 14.55 L1.4 10.5 Z" fill="#232E3D" stroke="#4DA6F5" stroke-width="1" stroke-linejoin="round"/><path d="M1.4 6.4 L10.4 0.9 L14.8 4.9 L5.65 10.3 Z" fill="#2E3D50" stroke="#4DA6F5" stroke-width="1" stroke-linejoin="round"/><path d="M5.65 10.3 V14.55" stroke="#4DA6F5" stroke-width="1"/></svg>
<div class="u" style="left:969.7px;top:2038.0px;height:29px;line-height:29px;font-size:20.5px;color:#DCDCDC;letter-spacing:0.195px;">text4</div>
<div class="u" style="left:1608.6px;top:2038.0px;height:29px;line-height:29px;font-size:20.5px;letter-spacing:0.17px;"><span style="color:#569CD6">null</span></div>
<div class="u" style="left:2790.4px;top:2038.0px;height:29px;line-height:29px;font-size:20.5px;letter-spacing:0.081px;"><span style="color:#569CD6">string</span></div>
<div class="r" style="left:974.0px;top:2065.0px;width:2852.0px;height:41.0px;background:#2D2D30;"></div>
<div class="r" style="left:974.0px;top:2065.0px;width:2820.0px;height:2.0px;background:#3F3F46;"></div>
<div class="r" style="left:3794.0px;top:2065.0px;width:32.0px;height:2.0px;background:#3E3E42;"></div>
<div class="r" style="left:898.0px;top:2065.0px;width:74.0px;height:39.0px;background:#252526;"></div>
<div class="u" style="left:907.3px;top:2071.5px;height:29px;line-height:29px;font-size:20.5px;color:#0097FB;letter-spacing:-0.638px;">Locals</div>
<div class="u" style="left:983.4px;top:2073.4px;height:29px;line-height:29px;font-size:20.5px;color:#D0D0D0;letter-spacing:-0.735px;">Search</div>
<div class="r" style="left:3837.0px;top:0.0px;width:2.0px;height:60.0px;background:#222225;"></div>
<div class="r" style="left:3837.0px;top:60.0px;width:2.0px;height:2057.0px;background:#29292C;"></div>
<div class="r" style="left:2.0px;top:2117.0px;width:3835.0px;height:40.5px;background:#CA5100;"></div>
<div class="r" style="left:3837.0px;top:2117.0px;width:2.0px;height:42.0px;background:#1E1E20;"></div>
<div class="r" style="left:0.0px;top:2157.5px;width:3839.0px;height:2.0px;background:#1B1B1C;"></div>
<div class="r" style="left:0.0px;top:2117.0px;width:2.0px;height:41.0px;background:#5A3A2A;"></div>
<div class="u" style="left:7.5px;top:2124.4px;height:29px;line-height:29px;font-size:20.5px;color:#FFFFFF;letter-spacing:0.006px;">Breakpoint #1 : pid=3744(pwsh.exe), Microsoft.VisualStudio.DevShell.dll</div>
</body></html>
